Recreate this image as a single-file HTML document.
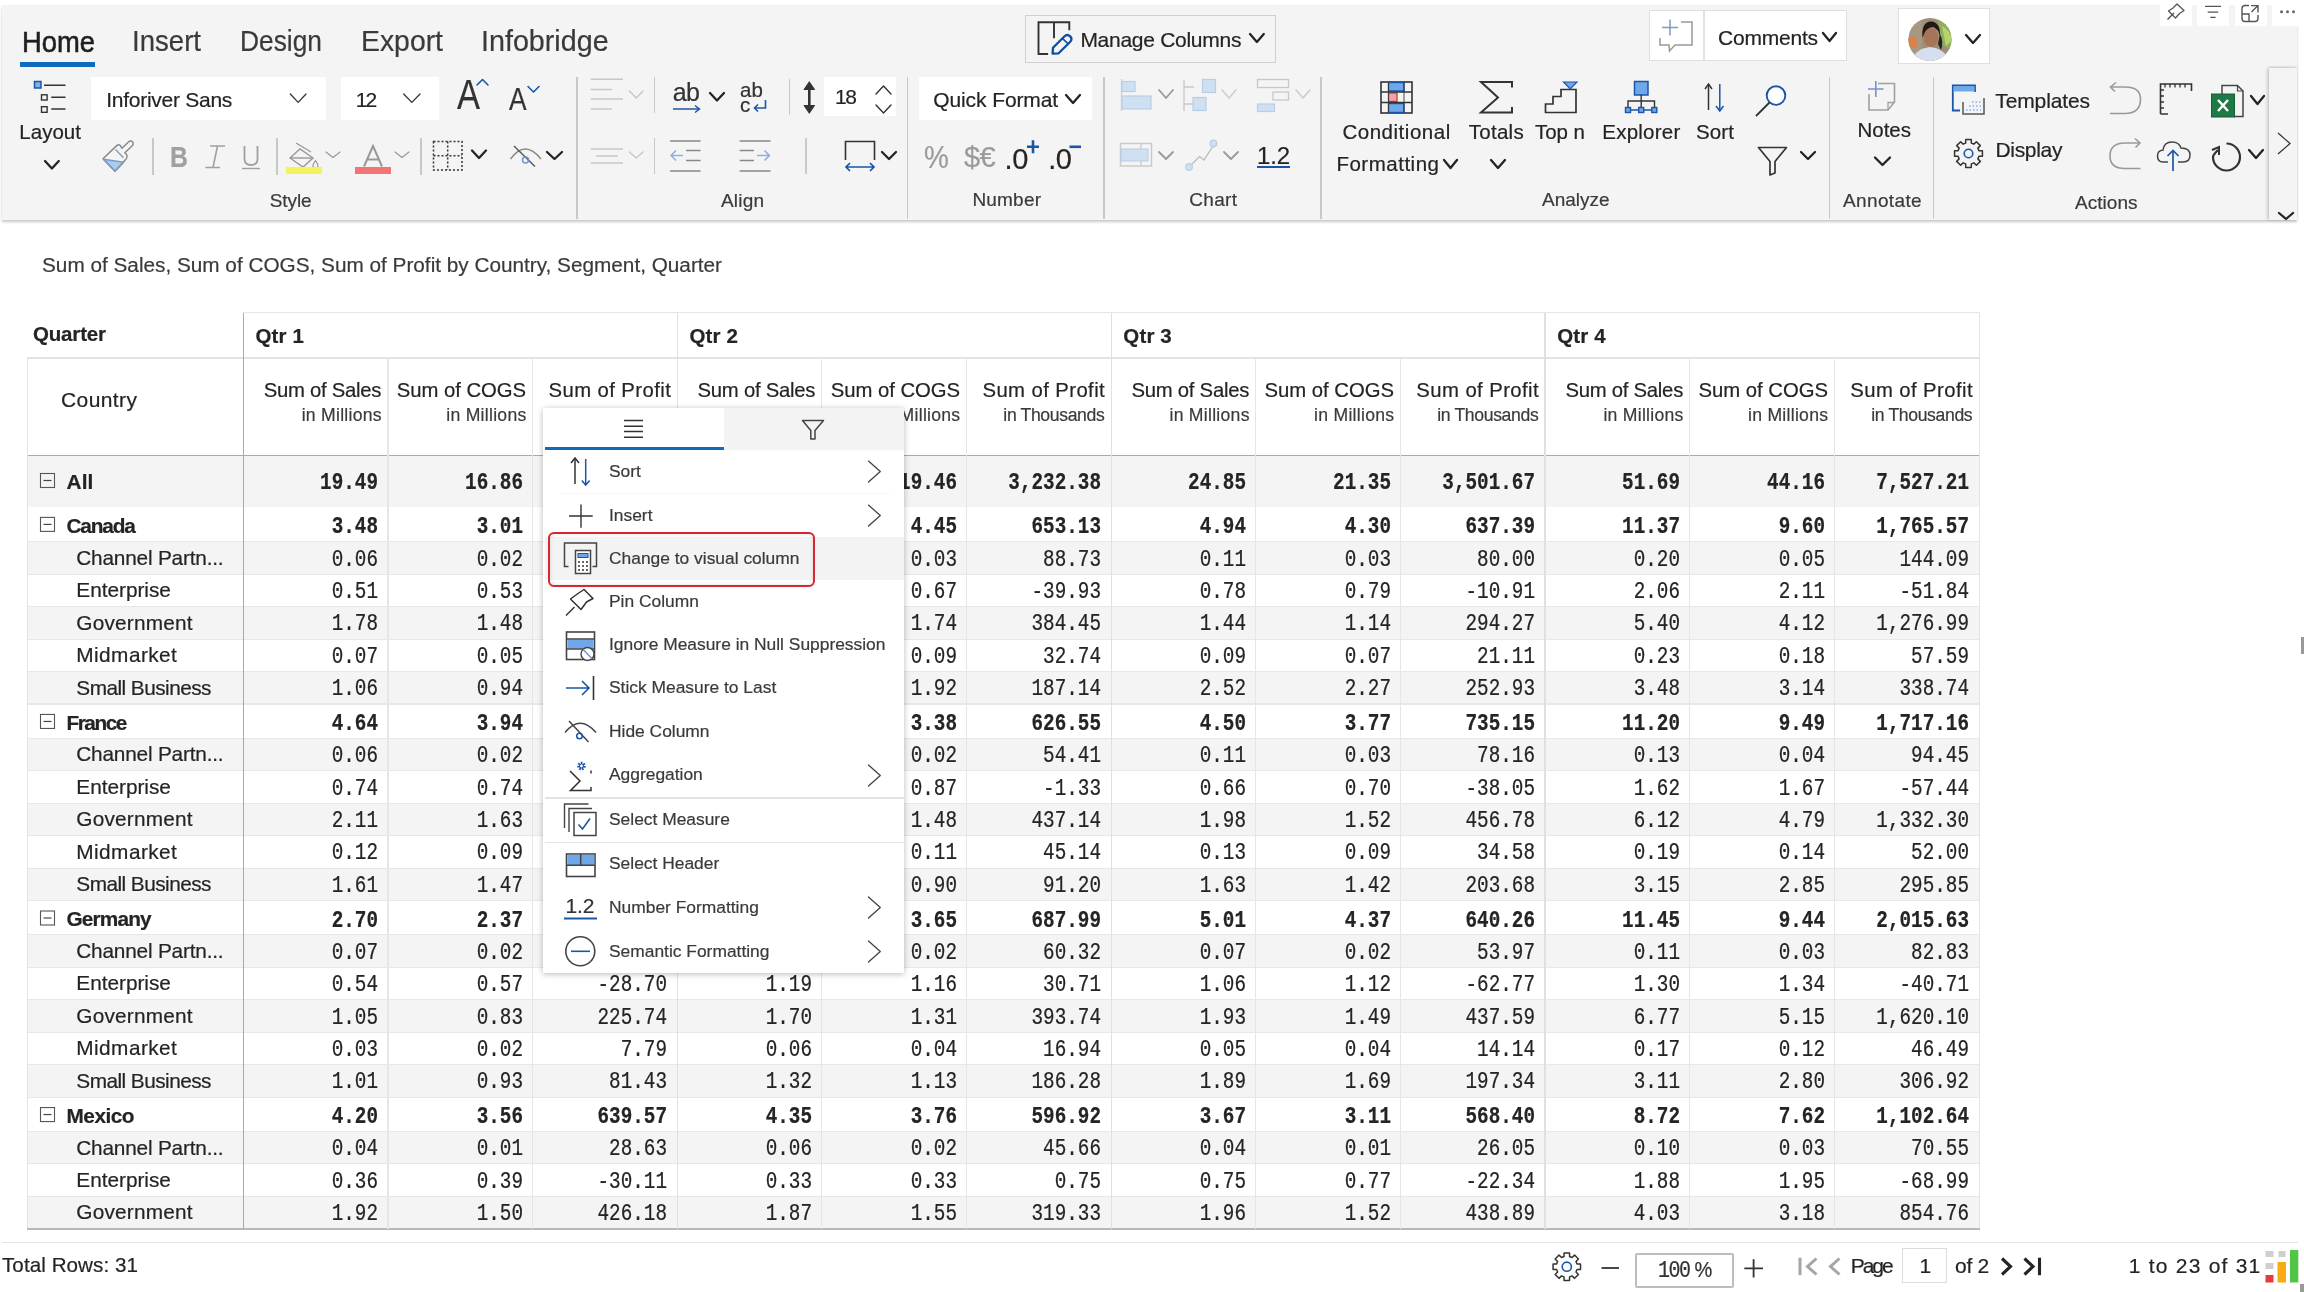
<!DOCTYPE html><html><head><meta charset="utf-8"><style>
html,body{margin:0;padding:0;width:2304px;height:1292px;overflow:hidden;background:#fff;}
body{position:relative;font-family:"Liberation Sans",sans-serif;color:#252423;}
.t{position:absolute;white-space:nowrap;-webkit-text-stroke:0.2px currentColor;}
.b{position:absolute;}
.s{position:absolute;overflow:visible;}
#ov{position:absolute;left:0;top:0;width:2304px;height:1292px;}
</style></head><body><div style="position:absolute;left:0;top:0;width:2304px;height:1292px;will-change:transform;">
<div class="b" style="left:2.00px;top:4.50px;width:2295.00px;height:215.50px;background:#f4f4f4;box-shadow:0 1.5px 2.5px rgba(0,0,0,0.22);"></div>
<div class="b" style="left:2160.00px;top:0.00px;width:32.00px;height:26.00px;background:#ffffff;"></div>
<div class="b" style="left:2197.00px;top:0.00px;width:32.00px;height:26.00px;background:#ffffff;"></div>
<div class="b" style="left:2235.00px;top:0.00px;width:32.00px;height:26.00px;background:#ffffff;"></div>
<div class="b" style="left:2272.00px;top:0.00px;width:32.00px;height:26.00px;background:#ffffff;"></div>
<div class="t" style="left:21.50px;top:26.73px;font-size:29.50px;line-height:29.50px;color:#201f1e;transform:scaleX(0.9276);transform-origin:0 0;-webkit-text-stroke:0.6px #201f1e;">Home</div>
<div class="t" style="left:132.30px;top:27.15px;font-size:29.00px;line-height:29.00px;color:#3b3a39;transform:scaleX(0.9513);transform-origin:0 0;">Insert</div>
<div class="t" style="left:240.30px;top:27.15px;font-size:29.00px;line-height:29.00px;color:#3b3a39;transform:scaleX(0.9083);transform-origin:0 0;">Design</div>
<div class="t" style="left:360.80px;top:27.15px;font-size:29.00px;line-height:29.00px;color:#3b3a39;transform:scaleX(0.9783);transform-origin:0 0;">Export</div>
<div class="t" style="left:481.30px;top:27.15px;font-size:29.00px;line-height:29.00px;color:#3b3a39;transform:scaleX(0.9892);transform-origin:0 0;">Infobridge</div>
<div class="b" style="left:20.00px;top:62.00px;width:75.00px;height:5.00px;background:#0f6cbd;"></div>
<div class="b" style="left:1024.50px;top:14.60px;width:251.00px;height:48.40px;background:#f4f4f4;border:1.5px solid #d0d0d0;box-sizing:border-box;"></div>
<div class="t" style="left:1080.40px;top:28.52px;font-size:21.00px;line-height:21.00px;letter-spacing:-0.276px;">Manage Columns</div>
<div class="b" style="left:1648.60px;top:9.70px;width:198.00px;height:51.60px;background:#ffffff;border:1.5px solid #dedede;box-sizing:border-box;"></div>
<div class="b" style="left:1703.30px;top:10.00px;width:1.50px;height:51.00px;background:#e2e2e2;"></div>
<div class="t" style="left:1718.00px;top:26.72px;font-size:21.00px;line-height:21.00px;letter-spacing:-0.218px;">Comments</div>
<div class="b" style="left:1898.30px;top:7.50px;width:91.40px;height:56.50px;background:#ffffff;border:1.5px solid #e0e0e0;box-sizing:border-box;"></div>
<div class="b" style="left:152.25px;top:138.00px;width:1.50px;height:36.50px;background:#c8c8c8;"></div>
<div class="b" style="left:276.25px;top:138.00px;width:1.50px;height:36.50px;background:#c8c8c8;"></div>
<div class="b" style="left:420.25px;top:138.00px;width:1.50px;height:36.50px;background:#c8c8c8;"></div>
<div class="b" style="left:576.25px;top:77.00px;width:1.50px;height:141.60px;background:#c8c8c8;"></div>
<div class="b" style="left:653.75px;top:77.00px;width:1.50px;height:36.00px;background:#c8c8c8;"></div>
<div class="b" style="left:653.75px;top:138.00px;width:1.50px;height:36.00px;background:#c8c8c8;"></div>
<div class="b" style="left:788.75px;top:79.00px;width:1.50px;height:36.00px;background:#c8c8c8;"></div>
<div class="b" style="left:805.25px;top:138.00px;width:1.50px;height:36.00px;background:#c8c8c8;"></div>
<div class="b" style="left:906.65px;top:77.00px;width:1.50px;height:142.00px;background:#c8c8c8;"></div>
<div class="b" style="left:1103.25px;top:77.00px;width:1.50px;height:142.00px;background:#c8c8c8;"></div>
<div class="b" style="left:1320.25px;top:77.00px;width:1.50px;height:142.00px;background:#c8c8c8;"></div>
<div class="b" style="left:1828.95px;top:77.00px;width:1.50px;height:142.00px;background:#c8c8c8;"></div>
<div class="b" style="left:1932.55px;top:77.00px;width:1.50px;height:142.00px;background:#c8c8c8;"></div>
<div class="t" style="left:19.30px;top:121.95px;font-size:20.50px;line-height:20.50px;letter-spacing:0.030px;">Layout</div>
<div class="b" style="left:91.00px;top:77.10px;width:235.00px;height:42.80px;background:#ffffff;"></div>
<div class="t" style="left:106.30px;top:88.52px;font-size:21.00px;line-height:21.00px;letter-spacing:-0.274px;">Inforiver Sans</div>
<div class="b" style="left:340.80px;top:77.10px;width:98.20px;height:42.80px;background:#ffffff;"></div>
<div class="t" style="left:355.70px;top:88.92px;font-size:21.00px;line-height:21.00px;letter-spacing:-1.859px;">12</div>
<div class="t" style="left:457.00px;top:74.45px;font-size:42.00px;line-height:42.00px;color:#333;transform:scaleX(0.82);transform-origin:left;">A</div>
<div class="t" style="left:509.00px;top:83.76px;font-size:31.00px;line-height:31.00px;color:#333;transform:scaleX(0.85);transform-origin:left;">A</div>
<div class="t" style="left:170.20px;top:142.23px;font-size:29.50px;line-height:29.50px;font-weight:bold;color:#a0a0a0;transform:scaleX(0.84);transform-origin:left;">B</div>
<div class="t" style="left:269.70px;top:190.62px;font-size:19.00px;line-height:19.00px;color:#3b3a39;letter-spacing:-0.060px;">Style</div>
<div class="t" style="left:672.80px;top:80.34px;font-size:25.00px;line-height:25.00px;color:#333;letter-spacing:-0.609px;">ab</div>
<div class="t" style="left:740.00px;top:79.85px;font-size:20.50px;line-height:20.50px;color:#333;letter-spacing:0.197px;">ab</div>
<div class="t" style="left:740.00px;top:94.95px;font-size:20.50px;line-height:20.50px;color:#333;">c</div>
<div class="b" style="left:823.50px;top:77.00px;width:72.50px;height:39.00px;background:#ffffff;"></div>
<div class="t" style="left:835.00px;top:86.22px;font-size:21.00px;line-height:21.00px;letter-spacing:-1.359px;">18</div>
<div class="t" style="left:721.00px;top:190.72px;font-size:19.00px;line-height:19.00px;color:#3b3a39;letter-spacing:0.187px;">Align</div>
<div class="b" style="left:919.20px;top:76.80px;width:173.00px;height:43.30px;background:#ffffff;"></div>
<div class="t" style="left:933.20px;top:88.52px;font-size:21.00px;line-height:21.00px;letter-spacing:-0.093px;">Quick Format</div>
<div class="t" style="left:923.50px;top:141.56px;font-size:31.00px;line-height:31.00px;color:#9a9a9a;transform:scaleX(0.9);transform-origin:left;">%</div>
<div class="t" style="left:964.00px;top:143.05px;font-size:29.00px;line-height:29.00px;color:#9a9a9a;letter-spacing:-0.558px;">$€</div>
<div class="t" style="left:1004.60px;top:145.15px;font-size:29.00px;line-height:29.00px;">.</div>
<div class="t" style="left:1012.20px;top:145.15px;font-size:29.00px;line-height:29.00px;">0</div>
<div class="t" style="left:1048.20px;top:145.15px;font-size:29.00px;line-height:29.00px;">.</div>
<div class="t" style="left:1055.70px;top:145.15px;font-size:29.00px;line-height:29.00px;">0</div>
<div class="t" style="left:972.40px;top:190.42px;font-size:19.00px;line-height:19.00px;color:#3b3a39;letter-spacing:0.204px;">Number</div>
<div class="t" style="left:1257.00px;top:143.68px;font-size:24.00px;line-height:24.00px;letter-spacing:-0.182px;">1.2</div>
<div class="t" style="left:1189.30px;top:190.42px;font-size:19.00px;line-height:19.00px;color:#3b3a39;letter-spacing:0.309px;">Chart</div>
<div class="t" style="left:1342.40px;top:121.65px;font-size:20.50px;line-height:20.50px;letter-spacing:0.533px;">Conditional</div>
<div class="t" style="left:1336.40px;top:154.45px;font-size:20.50px;line-height:20.50px;letter-spacing:0.513px;">Formatting</div>
<div class="t" style="left:1468.70px;top:121.65px;font-size:20.50px;line-height:20.50px;letter-spacing:0.289px;">Totals</div>
<div class="t" style="left:1535.00px;top:121.65px;font-size:20.50px;line-height:20.50px;letter-spacing:-0.037px;">Top n</div>
<div class="t" style="left:1602.30px;top:121.65px;font-size:20.50px;line-height:20.50px;letter-spacing:0.237px;">Explorer</div>
<div class="t" style="left:1696.00px;top:121.65px;font-size:20.50px;line-height:20.50px;letter-spacing:0.134px;">Sort</div>
<div class="t" style="left:1542.00px;top:189.92px;font-size:19.00px;line-height:19.00px;color:#3b3a39;letter-spacing:-0.016px;">Analyze</div>
<div class="t" style="left:1857.50px;top:119.95px;font-size:20.50px;line-height:20.50px;letter-spacing:-0.013px;">Notes</div>
<div class="t" style="left:1843.00px;top:190.82px;font-size:19.00px;line-height:19.00px;color:#3b3a39;letter-spacing:0.362px;">Annotate</div>
<div class="t" style="left:1995.30px;top:89.92px;font-size:21.00px;line-height:21.00px;letter-spacing:-0.127px;">Templates</div>
<div class="t" style="left:1995.50px;top:139.42px;font-size:21.00px;line-height:21.00px;letter-spacing:-0.326px;">Display</div>
<div class="t" style="left:2075.00px;top:193.22px;font-size:19.00px;line-height:19.00px;color:#3b3a39;letter-spacing:0.032px;">Actions</div>
<div class="b" style="left:2268.60px;top:67.50px;width:28.40px;height:152.50px;background:#f4f4f4;box-shadow:-2px 0 3px rgba(0,0,0,0.15), 0 -1px 2px rgba(0,0,0,0.12);"></div>
<div class="t" style="left:42.00px;top:254.94px;font-size:20.75px;line-height:20.75px;color:#3b3a39;">Sum of Sales, Sum of COGS, Sum of Profit by Country, Segment, Quarter</div>
<div class="b" style="left:27.00px;top:455.30px;width:1952.00px;height:51.70px;background:#f4f4f4;"></div>
<div class="b" style="left:27.00px;top:507.00px;width:1952.00px;height:34.80px;background:#ffffff;"></div>
<div class="b" style="left:27.00px;top:541.80px;width:1952.00px;height:32.45px;background:#f4f4f4;"></div>
<div class="b" style="left:27.00px;top:574.25px;width:1952.00px;height:32.45px;background:#ffffff;"></div>
<div class="b" style="left:27.00px;top:606.70px;width:1952.00px;height:32.45px;background:#f4f4f4;"></div>
<div class="b" style="left:27.00px;top:639.15px;width:1952.00px;height:32.45px;background:#ffffff;"></div>
<div class="b" style="left:27.00px;top:671.60px;width:1952.00px;height:32.45px;background:#f4f4f4;"></div>
<div class="b" style="left:27.00px;top:704.05px;width:1952.00px;height:34.30px;background:#ffffff;"></div>
<div class="b" style="left:27.00px;top:738.35px;width:1952.00px;height:32.45px;background:#f4f4f4;"></div>
<div class="b" style="left:27.00px;top:770.80px;width:1952.00px;height:32.45px;background:#ffffff;"></div>
<div class="b" style="left:27.00px;top:803.25px;width:1952.00px;height:32.45px;background:#f4f4f4;"></div>
<div class="b" style="left:27.00px;top:835.70px;width:1952.00px;height:32.45px;background:#ffffff;"></div>
<div class="b" style="left:27.00px;top:868.15px;width:1952.00px;height:32.45px;background:#f4f4f4;"></div>
<div class="b" style="left:27.00px;top:900.60px;width:1952.00px;height:34.30px;background:#ffffff;"></div>
<div class="b" style="left:27.00px;top:934.90px;width:1952.00px;height:32.45px;background:#f4f4f4;"></div>
<div class="b" style="left:27.00px;top:967.35px;width:1952.00px;height:32.45px;background:#ffffff;"></div>
<div class="b" style="left:27.00px;top:999.80px;width:1952.00px;height:32.45px;background:#f4f4f4;"></div>
<div class="b" style="left:27.00px;top:1032.25px;width:1952.00px;height:32.45px;background:#ffffff;"></div>
<div class="b" style="left:27.00px;top:1064.70px;width:1952.00px;height:32.45px;background:#f4f4f4;"></div>
<div class="b" style="left:27.00px;top:1097.15px;width:1952.00px;height:34.30px;background:#ffffff;"></div>
<div class="b" style="left:27.00px;top:1131.45px;width:1952.00px;height:32.45px;background:#f4f4f4;"></div>
<div class="b" style="left:27.00px;top:1163.90px;width:1952.00px;height:32.45px;background:#ffffff;"></div>
<div class="b" style="left:27.00px;top:1196.35px;width:1952.00px;height:32.45px;background:#f4f4f4;"></div>
<div class="b" style="left:27.00px;top:541.20px;width:1952.00px;height:1.20px;background:#e8e8e8;"></div>
<div class="b" style="left:27.00px;top:573.65px;width:1952.00px;height:1.20px;background:#e8e8e8;"></div>
<div class="b" style="left:27.00px;top:606.10px;width:1952.00px;height:1.20px;background:#e8e8e8;"></div>
<div class="b" style="left:27.00px;top:638.55px;width:1952.00px;height:1.20px;background:#e8e8e8;"></div>
<div class="b" style="left:27.00px;top:671.00px;width:1952.00px;height:1.20px;background:#e8e8e8;"></div>
<div class="b" style="left:27.00px;top:703.45px;width:1952.00px;height:1.20px;background:#e8e8e8;"></div>
<div class="b" style="left:27.00px;top:737.75px;width:1952.00px;height:1.20px;background:#e8e8e8;"></div>
<div class="b" style="left:27.00px;top:770.20px;width:1952.00px;height:1.20px;background:#e8e8e8;"></div>
<div class="b" style="left:27.00px;top:802.65px;width:1952.00px;height:1.20px;background:#e8e8e8;"></div>
<div class="b" style="left:27.00px;top:835.10px;width:1952.00px;height:1.20px;background:#e8e8e8;"></div>
<div class="b" style="left:27.00px;top:867.55px;width:1952.00px;height:1.20px;background:#e8e8e8;"></div>
<div class="b" style="left:27.00px;top:900.00px;width:1952.00px;height:1.20px;background:#e8e8e8;"></div>
<div class="b" style="left:27.00px;top:934.30px;width:1952.00px;height:1.20px;background:#e8e8e8;"></div>
<div class="b" style="left:27.00px;top:966.75px;width:1952.00px;height:1.20px;background:#e8e8e8;"></div>
<div class="b" style="left:27.00px;top:999.20px;width:1952.00px;height:1.20px;background:#e8e8e8;"></div>
<div class="b" style="left:27.00px;top:1031.65px;width:1952.00px;height:1.20px;background:#e8e8e8;"></div>
<div class="b" style="left:27.00px;top:1064.10px;width:1952.00px;height:1.20px;background:#e8e8e8;"></div>
<div class="b" style="left:27.00px;top:1096.55px;width:1952.00px;height:1.20px;background:#e8e8e8;"></div>
<div class="b" style="left:27.00px;top:1130.85px;width:1952.00px;height:1.20px;background:#e8e8e8;"></div>
<div class="b" style="left:27.00px;top:1163.30px;width:1952.00px;height:1.20px;background:#e8e8e8;"></div>
<div class="b" style="left:27.00px;top:1195.75px;width:1952.00px;height:1.20px;background:#e8e8e8;"></div>
<div class="b" style="left:27.00px;top:1228.20px;width:1952.00px;height:1.20px;background:#e8e8e8;"></div>
<div class="b" style="left:243.30px;top:312.00px;width:1736.20px;height:1.20px;background:#e6e6e6;"></div>
<div class="b" style="left:27.00px;top:357.40px;width:1952.50px;height:1.30px;background:#e3e3e3;"></div>
<div class="b" style="left:27.00px;top:454.90px;width:1952.50px;height:1.30px;background:#a9a9a9;"></div>
<div class="b" style="left:27.00px;top:357.40px;width:1.20px;height:872.10px;background:#e3e3e3;"></div>
<div class="b" style="left:1978.60px;top:312.00px;width:1.20px;height:917.50px;background:#e3e3e3;"></div>
<div class="b" style="left:27.00px;top:1228.30px;width:1952.50px;height:1.50px;background:#b8b8b8;"></div>
<div class="b" style="left:242.60px;top:312.50px;width:1.40px;height:916.50px;background:#a9a9a9;"></div>
<div class="b" style="left:387.34px;top:358.00px;width:1.20px;height:871.00px;background:#e6e6e6;"></div>
<div class="b" style="left:531.98px;top:358.00px;width:1.20px;height:871.00px;background:#e6e6e6;"></div>
<div class="b" style="left:676.62px;top:312.50px;width:1.20px;height:916.50px;background:#e0e0e0;"></div>
<div class="b" style="left:821.26px;top:358.00px;width:1.20px;height:871.00px;background:#e6e6e6;"></div>
<div class="b" style="left:965.90px;top:358.00px;width:1.20px;height:871.00px;background:#e6e6e6;"></div>
<div class="b" style="left:1110.54px;top:312.50px;width:1.20px;height:916.50px;background:#e0e0e0;"></div>
<div class="b" style="left:1255.18px;top:358.00px;width:1.20px;height:871.00px;background:#e6e6e6;"></div>
<div class="b" style="left:1399.82px;top:358.00px;width:1.20px;height:871.00px;background:#e6e6e6;"></div>
<div class="b" style="left:1544.46px;top:312.50px;width:1.20px;height:916.50px;background:#e0e0e0;"></div>
<div class="b" style="left:1689.10px;top:358.00px;width:1.20px;height:871.00px;background:#e6e6e6;"></div>
<div class="b" style="left:1833.74px;top:358.00px;width:1.20px;height:871.00px;background:#e6e6e6;"></div>
<div class="t" style="left:33.00px;top:323.85px;font-size:20.50px;line-height:20.50px;font-weight:bold;letter-spacing:-0.176px;">Quarter</div>
<div class="t" style="left:255.50px;top:325.65px;font-size:20.50px;line-height:20.50px;font-weight:bold;letter-spacing:0.138px;">Qtr 1</div>
<div class="t" style="left:689.42px;top:325.65px;font-size:20.50px;line-height:20.50px;font-weight:bold;letter-spacing:0.138px;">Qtr 2</div>
<div class="t" style="left:1123.34px;top:325.65px;font-size:20.50px;line-height:20.50px;font-weight:bold;letter-spacing:0.138px;">Qtr 3</div>
<div class="t" style="left:1557.26px;top:325.65px;font-size:20.50px;line-height:20.50px;font-weight:bold;letter-spacing:0.138px;">Qtr 4</div>
<div class="t" style="left:61.00px;top:388.82px;font-size:21.00px;line-height:21.00px;letter-spacing:0.411px;">Country</div>
<div class="t" style="left:263.64px;top:379.62px;font-size:20.30px;line-height:20.30px;letter-spacing:-0.248px;">Sum of Sales</div>
<div class="t" style="left:301.64px;top:406.70px;font-size:17.60px;line-height:17.60px;color:#3b3a39;letter-spacing:0.273px;">in Millions</div>
<div class="t" style="left:396.78px;top:379.62px;font-size:20.30px;line-height:20.30px;letter-spacing:-0.023px;">Sum of COGS</div>
<div class="t" style="left:446.28px;top:406.70px;font-size:17.60px;line-height:17.60px;color:#3b3a39;letter-spacing:0.273px;">in Millions</div>
<div class="t" style="left:548.52px;top:379.62px;font-size:20.30px;line-height:20.30px;letter-spacing:0.422px;">Sum of Profit</div>
<div class="t" style="left:569.42px;top:406.70px;font-size:17.60px;line-height:17.60px;color:#3b3a39;letter-spacing:-0.350px;">in Thousands</div>
<div class="t" style="left:697.56px;top:379.62px;font-size:20.30px;line-height:20.30px;letter-spacing:-0.248px;">Sum of Sales</div>
<div class="t" style="left:735.56px;top:406.70px;font-size:17.60px;line-height:17.60px;color:#3b3a39;letter-spacing:0.273px;">in Millions</div>
<div class="t" style="left:830.70px;top:379.62px;font-size:20.30px;line-height:20.30px;letter-spacing:-0.023px;">Sum of COGS</div>
<div class="t" style="left:880.20px;top:406.70px;font-size:17.60px;line-height:17.60px;color:#3b3a39;letter-spacing:0.273px;">in Millions</div>
<div class="t" style="left:982.44px;top:379.62px;font-size:20.30px;line-height:20.30px;letter-spacing:0.422px;">Sum of Profit</div>
<div class="t" style="left:1003.34px;top:406.70px;font-size:17.60px;line-height:17.60px;color:#3b3a39;letter-spacing:-0.350px;">in Thousands</div>
<div class="t" style="left:1131.48px;top:379.62px;font-size:20.30px;line-height:20.30px;letter-spacing:-0.248px;">Sum of Sales</div>
<div class="t" style="left:1169.48px;top:406.70px;font-size:17.60px;line-height:17.60px;color:#3b3a39;letter-spacing:0.273px;">in Millions</div>
<div class="t" style="left:1264.62px;top:379.62px;font-size:20.30px;line-height:20.30px;letter-spacing:-0.023px;">Sum of COGS</div>
<div class="t" style="left:1314.12px;top:406.70px;font-size:17.60px;line-height:17.60px;color:#3b3a39;letter-spacing:0.273px;">in Millions</div>
<div class="t" style="left:1416.36px;top:379.62px;font-size:20.30px;line-height:20.30px;letter-spacing:0.422px;">Sum of Profit</div>
<div class="t" style="left:1437.26px;top:406.70px;font-size:17.60px;line-height:17.60px;color:#3b3a39;letter-spacing:-0.350px;">in Thousands</div>
<div class="t" style="left:1565.40px;top:379.62px;font-size:20.30px;line-height:20.30px;letter-spacing:-0.248px;">Sum of Sales</div>
<div class="t" style="left:1603.40px;top:406.70px;font-size:17.60px;line-height:17.60px;color:#3b3a39;letter-spacing:0.273px;">in Millions</div>
<div class="t" style="left:1698.54px;top:379.62px;font-size:20.30px;line-height:20.30px;letter-spacing:-0.023px;">Sum of COGS</div>
<div class="t" style="left:1748.04px;top:406.70px;font-size:17.60px;line-height:17.60px;color:#3b3a39;letter-spacing:0.273px;">in Millions</div>
<div class="t" style="left:1850.28px;top:379.62px;font-size:20.30px;line-height:20.30px;letter-spacing:0.422px;">Sum of Profit</div>
<div class="t" style="left:1871.18px;top:406.70px;font-size:17.60px;line-height:17.60px;color:#3b3a39;letter-spacing:-0.350px;">in Thousands</div>
<div class="t" style="left:66.50px;top:471.89px;font-size:20.80px;line-height:20.80px;font-weight:bold;letter-spacing:0.111px;">All</div>
<div class="t" style="left:318.13px;top:474.27px;font-size:20.00px;line-height:20.00px;font-family:'Liberation Mono', monospace;font-weight:bold;transform:scale(0.965,1.17);transform-origin:100% 15.33px;">19.49</div>
<div class="t" style="left:462.77px;top:474.27px;font-size:20.00px;line-height:20.00px;font-family:'Liberation Mono', monospace;font-weight:bold;transform:scale(0.965,1.17);transform-origin:100% 15.33px;">16.86</div>
<div class="t" style="left:896.69px;top:474.27px;font-size:20.00px;line-height:20.00px;font-family:'Liberation Mono', monospace;font-weight:bold;transform:scale(0.965,1.17);transform-origin:100% 15.33px;">19.46</div>
<div class="t" style="left:1005.33px;top:474.27px;font-size:20.00px;line-height:20.00px;font-family:'Liberation Mono', monospace;font-weight:bold;transform:scale(0.965,1.17);transform-origin:100% 15.33px;">3,232.38</div>
<div class="t" style="left:1185.97px;top:474.27px;font-size:20.00px;line-height:20.00px;font-family:'Liberation Mono', monospace;font-weight:bold;transform:scale(0.965,1.17);transform-origin:100% 15.33px;">24.85</div>
<div class="t" style="left:1330.61px;top:474.27px;font-size:20.00px;line-height:20.00px;font-family:'Liberation Mono', monospace;font-weight:bold;transform:scale(0.965,1.17);transform-origin:100% 15.33px;">21.35</div>
<div class="t" style="left:1439.25px;top:474.27px;font-size:20.00px;line-height:20.00px;font-family:'Liberation Mono', monospace;font-weight:bold;transform:scale(0.965,1.17);transform-origin:100% 15.33px;">3,501.67</div>
<div class="t" style="left:1619.89px;top:474.27px;font-size:20.00px;line-height:20.00px;font-family:'Liberation Mono', monospace;font-weight:bold;transform:scale(0.965,1.17);transform-origin:100% 15.33px;">51.69</div>
<div class="t" style="left:1764.53px;top:474.27px;font-size:20.00px;line-height:20.00px;font-family:'Liberation Mono', monospace;font-weight:bold;transform:scale(0.965,1.17);transform-origin:100% 15.33px;">44.16</div>
<div class="t" style="left:1873.17px;top:474.27px;font-size:20.00px;line-height:20.00px;font-family:'Liberation Mono', monospace;font-weight:bold;transform:scale(0.965,1.17);transform-origin:100% 15.33px;">7,527.21</div>
<div class="t" style="left:66.50px;top:515.79px;font-size:20.80px;line-height:20.80px;font-weight:bold;letter-spacing:-1.148px;">Canada</div>
<div class="t" style="left:330.13px;top:518.17px;font-size:20.00px;line-height:20.00px;font-family:'Liberation Mono', monospace;font-weight:bold;transform:scale(0.965,1.17);transform-origin:100% 15.33px;">3.48</div>
<div class="t" style="left:474.77px;top:518.17px;font-size:20.00px;line-height:20.00px;font-family:'Liberation Mono', monospace;font-weight:bold;transform:scale(0.965,1.17);transform-origin:100% 15.33px;">3.01</div>
<div class="t" style="left:908.69px;top:518.17px;font-size:20.00px;line-height:20.00px;font-family:'Liberation Mono', monospace;font-weight:bold;transform:scale(0.965,1.17);transform-origin:100% 15.33px;">4.45</div>
<div class="t" style="left:1029.33px;top:518.17px;font-size:20.00px;line-height:20.00px;font-family:'Liberation Mono', monospace;font-weight:bold;transform:scale(0.965,1.17);transform-origin:100% 15.33px;">653.13</div>
<div class="t" style="left:1197.97px;top:518.17px;font-size:20.00px;line-height:20.00px;font-family:'Liberation Mono', monospace;font-weight:bold;transform:scale(0.965,1.17);transform-origin:100% 15.33px;">4.94</div>
<div class="t" style="left:1342.61px;top:518.17px;font-size:20.00px;line-height:20.00px;font-family:'Liberation Mono', monospace;font-weight:bold;transform:scale(0.965,1.17);transform-origin:100% 15.33px;">4.30</div>
<div class="t" style="left:1463.25px;top:518.17px;font-size:20.00px;line-height:20.00px;font-family:'Liberation Mono', monospace;font-weight:bold;transform:scale(0.965,1.17);transform-origin:100% 15.33px;">637.39</div>
<div class="t" style="left:1619.89px;top:518.17px;font-size:20.00px;line-height:20.00px;font-family:'Liberation Mono', monospace;font-weight:bold;transform:scale(0.965,1.17);transform-origin:100% 15.33px;">11.37</div>
<div class="t" style="left:1776.53px;top:518.17px;font-size:20.00px;line-height:20.00px;font-family:'Liberation Mono', monospace;font-weight:bold;transform:scale(0.965,1.17);transform-origin:100% 15.33px;">9.60</div>
<div class="t" style="left:1873.17px;top:518.17px;font-size:20.00px;line-height:20.00px;font-family:'Liberation Mono', monospace;font-weight:bold;transform:scale(0.965,1.17);transform-origin:100% 15.33px;">1,765.57</div>
<div class="t" style="left:76.30px;top:547.89px;font-size:20.80px;line-height:20.80px;letter-spacing:-0.201px;">Channel Partn...</div>
<div class="t" style="left:330.13px;top:550.57px;font-size:20.00px;line-height:20.00px;font-family:'Liberation Mono', monospace;transform:scale(0.965,1.17);transform-origin:100% 15.33px;">0.06</div>
<div class="t" style="left:474.77px;top:550.57px;font-size:20.00px;line-height:20.00px;font-family:'Liberation Mono', monospace;transform:scale(0.965,1.17);transform-origin:100% 15.33px;">0.02</div>
<div class="t" style="left:908.69px;top:550.57px;font-size:20.00px;line-height:20.00px;font-family:'Liberation Mono', monospace;transform:scale(0.965,1.17);transform-origin:100% 15.33px;">0.03</div>
<div class="t" style="left:1041.33px;top:550.57px;font-size:20.00px;line-height:20.00px;font-family:'Liberation Mono', monospace;transform:scale(0.965,1.17);transform-origin:100% 15.33px;">88.73</div>
<div class="t" style="left:1197.97px;top:550.57px;font-size:20.00px;line-height:20.00px;font-family:'Liberation Mono', monospace;transform:scale(0.965,1.17);transform-origin:100% 15.33px;">0.11</div>
<div class="t" style="left:1342.61px;top:550.57px;font-size:20.00px;line-height:20.00px;font-family:'Liberation Mono', monospace;transform:scale(0.965,1.17);transform-origin:100% 15.33px;">0.03</div>
<div class="t" style="left:1475.25px;top:550.57px;font-size:20.00px;line-height:20.00px;font-family:'Liberation Mono', monospace;transform:scale(0.965,1.17);transform-origin:100% 15.33px;">80.00</div>
<div class="t" style="left:1631.89px;top:550.57px;font-size:20.00px;line-height:20.00px;font-family:'Liberation Mono', monospace;transform:scale(0.965,1.17);transform-origin:100% 15.33px;">0.20</div>
<div class="t" style="left:1776.53px;top:550.57px;font-size:20.00px;line-height:20.00px;font-family:'Liberation Mono', monospace;transform:scale(0.965,1.17);transform-origin:100% 15.33px;">0.05</div>
<div class="t" style="left:1897.17px;top:550.57px;font-size:20.00px;line-height:20.00px;font-family:'Liberation Mono', monospace;transform:scale(0.965,1.17);transform-origin:100% 15.33px;">144.09</div>
<div class="t" style="left:76.30px;top:580.34px;font-size:20.80px;line-height:20.80px;letter-spacing:-0.023px;">Enterprise</div>
<div class="t" style="left:330.13px;top:583.02px;font-size:20.00px;line-height:20.00px;font-family:'Liberation Mono', monospace;transform:scale(0.965,1.17);transform-origin:100% 15.33px;">0.51</div>
<div class="t" style="left:474.77px;top:583.02px;font-size:20.00px;line-height:20.00px;font-family:'Liberation Mono', monospace;transform:scale(0.965,1.17);transform-origin:100% 15.33px;">0.53</div>
<div class="t" style="left:908.69px;top:583.02px;font-size:20.00px;line-height:20.00px;font-family:'Liberation Mono', monospace;transform:scale(0.965,1.17);transform-origin:100% 15.33px;">0.67</div>
<div class="t" style="left:1029.33px;top:583.02px;font-size:20.00px;line-height:20.00px;font-family:'Liberation Mono', monospace;transform:scale(0.965,1.17);transform-origin:100% 15.33px;">-39.93</div>
<div class="t" style="left:1197.97px;top:583.02px;font-size:20.00px;line-height:20.00px;font-family:'Liberation Mono', monospace;transform:scale(0.965,1.17);transform-origin:100% 15.33px;">0.78</div>
<div class="t" style="left:1342.61px;top:583.02px;font-size:20.00px;line-height:20.00px;font-family:'Liberation Mono', monospace;transform:scale(0.965,1.17);transform-origin:100% 15.33px;">0.79</div>
<div class="t" style="left:1463.25px;top:583.02px;font-size:20.00px;line-height:20.00px;font-family:'Liberation Mono', monospace;transform:scale(0.965,1.17);transform-origin:100% 15.33px;">-10.91</div>
<div class="t" style="left:1631.89px;top:583.02px;font-size:20.00px;line-height:20.00px;font-family:'Liberation Mono', monospace;transform:scale(0.965,1.17);transform-origin:100% 15.33px;">2.06</div>
<div class="t" style="left:1776.53px;top:583.02px;font-size:20.00px;line-height:20.00px;font-family:'Liberation Mono', monospace;transform:scale(0.965,1.17);transform-origin:100% 15.33px;">2.11</div>
<div class="t" style="left:1897.17px;top:583.02px;font-size:20.00px;line-height:20.00px;font-family:'Liberation Mono', monospace;transform:scale(0.965,1.17);transform-origin:100% 15.33px;">-51.84</div>
<div class="t" style="left:76.30px;top:612.79px;font-size:20.80px;line-height:20.80px;letter-spacing:0.205px;">Government</div>
<div class="t" style="left:330.13px;top:615.47px;font-size:20.00px;line-height:20.00px;font-family:'Liberation Mono', monospace;transform:scale(0.965,1.17);transform-origin:100% 15.33px;">1.78</div>
<div class="t" style="left:474.77px;top:615.47px;font-size:20.00px;line-height:20.00px;font-family:'Liberation Mono', monospace;transform:scale(0.965,1.17);transform-origin:100% 15.33px;">1.48</div>
<div class="t" style="left:908.69px;top:615.47px;font-size:20.00px;line-height:20.00px;font-family:'Liberation Mono', monospace;transform:scale(0.965,1.17);transform-origin:100% 15.33px;">1.74</div>
<div class="t" style="left:1029.33px;top:615.47px;font-size:20.00px;line-height:20.00px;font-family:'Liberation Mono', monospace;transform:scale(0.965,1.17);transform-origin:100% 15.33px;">384.45</div>
<div class="t" style="left:1197.97px;top:615.47px;font-size:20.00px;line-height:20.00px;font-family:'Liberation Mono', monospace;transform:scale(0.965,1.17);transform-origin:100% 15.33px;">1.44</div>
<div class="t" style="left:1342.61px;top:615.47px;font-size:20.00px;line-height:20.00px;font-family:'Liberation Mono', monospace;transform:scale(0.965,1.17);transform-origin:100% 15.33px;">1.14</div>
<div class="t" style="left:1463.25px;top:615.47px;font-size:20.00px;line-height:20.00px;font-family:'Liberation Mono', monospace;transform:scale(0.965,1.17);transform-origin:100% 15.33px;">294.27</div>
<div class="t" style="left:1631.89px;top:615.47px;font-size:20.00px;line-height:20.00px;font-family:'Liberation Mono', monospace;transform:scale(0.965,1.17);transform-origin:100% 15.33px;">5.40</div>
<div class="t" style="left:1776.53px;top:615.47px;font-size:20.00px;line-height:20.00px;font-family:'Liberation Mono', monospace;transform:scale(0.965,1.17);transform-origin:100% 15.33px;">4.12</div>
<div class="t" style="left:1873.17px;top:615.47px;font-size:20.00px;line-height:20.00px;font-family:'Liberation Mono', monospace;transform:scale(0.965,1.17);transform-origin:100% 15.33px;">1,276.99</div>
<div class="t" style="left:76.30px;top:645.24px;font-size:20.80px;line-height:20.80px;letter-spacing:0.439px;">Midmarket</div>
<div class="t" style="left:330.13px;top:647.92px;font-size:20.00px;line-height:20.00px;font-family:'Liberation Mono', monospace;transform:scale(0.965,1.17);transform-origin:100% 15.33px;">0.07</div>
<div class="t" style="left:474.77px;top:647.92px;font-size:20.00px;line-height:20.00px;font-family:'Liberation Mono', monospace;transform:scale(0.965,1.17);transform-origin:100% 15.33px;">0.05</div>
<div class="t" style="left:908.69px;top:647.92px;font-size:20.00px;line-height:20.00px;font-family:'Liberation Mono', monospace;transform:scale(0.965,1.17);transform-origin:100% 15.33px;">0.09</div>
<div class="t" style="left:1041.33px;top:647.92px;font-size:20.00px;line-height:20.00px;font-family:'Liberation Mono', monospace;transform:scale(0.965,1.17);transform-origin:100% 15.33px;">32.74</div>
<div class="t" style="left:1197.97px;top:647.92px;font-size:20.00px;line-height:20.00px;font-family:'Liberation Mono', monospace;transform:scale(0.965,1.17);transform-origin:100% 15.33px;">0.09</div>
<div class="t" style="left:1342.61px;top:647.92px;font-size:20.00px;line-height:20.00px;font-family:'Liberation Mono', monospace;transform:scale(0.965,1.17);transform-origin:100% 15.33px;">0.07</div>
<div class="t" style="left:1475.25px;top:647.92px;font-size:20.00px;line-height:20.00px;font-family:'Liberation Mono', monospace;transform:scale(0.965,1.17);transform-origin:100% 15.33px;">21.11</div>
<div class="t" style="left:1631.89px;top:647.92px;font-size:20.00px;line-height:20.00px;font-family:'Liberation Mono', monospace;transform:scale(0.965,1.17);transform-origin:100% 15.33px;">0.23</div>
<div class="t" style="left:1776.53px;top:647.92px;font-size:20.00px;line-height:20.00px;font-family:'Liberation Mono', monospace;transform:scale(0.965,1.17);transform-origin:100% 15.33px;">0.18</div>
<div class="t" style="left:1909.17px;top:647.92px;font-size:20.00px;line-height:20.00px;font-family:'Liberation Mono', monospace;transform:scale(0.965,1.17);transform-origin:100% 15.33px;">57.59</div>
<div class="t" style="left:76.30px;top:677.69px;font-size:20.80px;line-height:20.80px;letter-spacing:-0.538px;">Small Business</div>
<div class="t" style="left:330.13px;top:680.37px;font-size:20.00px;line-height:20.00px;font-family:'Liberation Mono', monospace;transform:scale(0.965,1.17);transform-origin:100% 15.33px;">1.06</div>
<div class="t" style="left:474.77px;top:680.37px;font-size:20.00px;line-height:20.00px;font-family:'Liberation Mono', monospace;transform:scale(0.965,1.17);transform-origin:100% 15.33px;">0.94</div>
<div class="t" style="left:908.69px;top:680.37px;font-size:20.00px;line-height:20.00px;font-family:'Liberation Mono', monospace;transform:scale(0.965,1.17);transform-origin:100% 15.33px;">1.92</div>
<div class="t" style="left:1029.33px;top:680.37px;font-size:20.00px;line-height:20.00px;font-family:'Liberation Mono', monospace;transform:scale(0.965,1.17);transform-origin:100% 15.33px;">187.14</div>
<div class="t" style="left:1197.97px;top:680.37px;font-size:20.00px;line-height:20.00px;font-family:'Liberation Mono', monospace;transform:scale(0.965,1.17);transform-origin:100% 15.33px;">2.52</div>
<div class="t" style="left:1342.61px;top:680.37px;font-size:20.00px;line-height:20.00px;font-family:'Liberation Mono', monospace;transform:scale(0.965,1.17);transform-origin:100% 15.33px;">2.27</div>
<div class="t" style="left:1463.25px;top:680.37px;font-size:20.00px;line-height:20.00px;font-family:'Liberation Mono', monospace;transform:scale(0.965,1.17);transform-origin:100% 15.33px;">252.93</div>
<div class="t" style="left:1631.89px;top:680.37px;font-size:20.00px;line-height:20.00px;font-family:'Liberation Mono', monospace;transform:scale(0.965,1.17);transform-origin:100% 15.33px;">3.48</div>
<div class="t" style="left:1776.53px;top:680.37px;font-size:20.00px;line-height:20.00px;font-family:'Liberation Mono', monospace;transform:scale(0.965,1.17);transform-origin:100% 15.33px;">3.14</div>
<div class="t" style="left:1897.17px;top:680.37px;font-size:20.00px;line-height:20.00px;font-family:'Liberation Mono', monospace;transform:scale(0.965,1.17);transform-origin:100% 15.33px;">338.74</div>
<div class="t" style="left:66.50px;top:712.84px;font-size:20.80px;line-height:20.80px;font-weight:bold;letter-spacing:-1.462px;">France</div>
<div class="t" style="left:330.13px;top:715.22px;font-size:20.00px;line-height:20.00px;font-family:'Liberation Mono', monospace;font-weight:bold;transform:scale(0.965,1.17);transform-origin:100% 15.33px;">4.64</div>
<div class="t" style="left:474.77px;top:715.22px;font-size:20.00px;line-height:20.00px;font-family:'Liberation Mono', monospace;font-weight:bold;transform:scale(0.965,1.17);transform-origin:100% 15.33px;">3.94</div>
<div class="t" style="left:908.69px;top:715.22px;font-size:20.00px;line-height:20.00px;font-family:'Liberation Mono', monospace;font-weight:bold;transform:scale(0.965,1.17);transform-origin:100% 15.33px;">3.38</div>
<div class="t" style="left:1029.33px;top:715.22px;font-size:20.00px;line-height:20.00px;font-family:'Liberation Mono', monospace;font-weight:bold;transform:scale(0.965,1.17);transform-origin:100% 15.33px;">626.55</div>
<div class="t" style="left:1197.97px;top:715.22px;font-size:20.00px;line-height:20.00px;font-family:'Liberation Mono', monospace;font-weight:bold;transform:scale(0.965,1.17);transform-origin:100% 15.33px;">4.50</div>
<div class="t" style="left:1342.61px;top:715.22px;font-size:20.00px;line-height:20.00px;font-family:'Liberation Mono', monospace;font-weight:bold;transform:scale(0.965,1.17);transform-origin:100% 15.33px;">3.77</div>
<div class="t" style="left:1463.25px;top:715.22px;font-size:20.00px;line-height:20.00px;font-family:'Liberation Mono', monospace;font-weight:bold;transform:scale(0.965,1.17);transform-origin:100% 15.33px;">735.15</div>
<div class="t" style="left:1619.89px;top:715.22px;font-size:20.00px;line-height:20.00px;font-family:'Liberation Mono', monospace;font-weight:bold;transform:scale(0.965,1.17);transform-origin:100% 15.33px;">11.20</div>
<div class="t" style="left:1776.53px;top:715.22px;font-size:20.00px;line-height:20.00px;font-family:'Liberation Mono', monospace;font-weight:bold;transform:scale(0.965,1.17);transform-origin:100% 15.33px;">9.49</div>
<div class="t" style="left:1873.17px;top:715.22px;font-size:20.00px;line-height:20.00px;font-family:'Liberation Mono', monospace;font-weight:bold;transform:scale(0.965,1.17);transform-origin:100% 15.33px;">1,717.16</div>
<div class="t" style="left:76.30px;top:744.44px;font-size:20.80px;line-height:20.80px;letter-spacing:-0.201px;">Channel Partn...</div>
<div class="t" style="left:330.13px;top:747.12px;font-size:20.00px;line-height:20.00px;font-family:'Liberation Mono', monospace;transform:scale(0.965,1.17);transform-origin:100% 15.33px;">0.06</div>
<div class="t" style="left:474.77px;top:747.12px;font-size:20.00px;line-height:20.00px;font-family:'Liberation Mono', monospace;transform:scale(0.965,1.17);transform-origin:100% 15.33px;">0.02</div>
<div class="t" style="left:908.69px;top:747.12px;font-size:20.00px;line-height:20.00px;font-family:'Liberation Mono', monospace;transform:scale(0.965,1.17);transform-origin:100% 15.33px;">0.02</div>
<div class="t" style="left:1041.33px;top:747.12px;font-size:20.00px;line-height:20.00px;font-family:'Liberation Mono', monospace;transform:scale(0.965,1.17);transform-origin:100% 15.33px;">54.41</div>
<div class="t" style="left:1197.97px;top:747.12px;font-size:20.00px;line-height:20.00px;font-family:'Liberation Mono', monospace;transform:scale(0.965,1.17);transform-origin:100% 15.33px;">0.11</div>
<div class="t" style="left:1342.61px;top:747.12px;font-size:20.00px;line-height:20.00px;font-family:'Liberation Mono', monospace;transform:scale(0.965,1.17);transform-origin:100% 15.33px;">0.03</div>
<div class="t" style="left:1475.25px;top:747.12px;font-size:20.00px;line-height:20.00px;font-family:'Liberation Mono', monospace;transform:scale(0.965,1.17);transform-origin:100% 15.33px;">78.16</div>
<div class="t" style="left:1631.89px;top:747.12px;font-size:20.00px;line-height:20.00px;font-family:'Liberation Mono', monospace;transform:scale(0.965,1.17);transform-origin:100% 15.33px;">0.13</div>
<div class="t" style="left:1776.53px;top:747.12px;font-size:20.00px;line-height:20.00px;font-family:'Liberation Mono', monospace;transform:scale(0.965,1.17);transform-origin:100% 15.33px;">0.04</div>
<div class="t" style="left:1909.17px;top:747.12px;font-size:20.00px;line-height:20.00px;font-family:'Liberation Mono', monospace;transform:scale(0.965,1.17);transform-origin:100% 15.33px;">94.45</div>
<div class="t" style="left:76.30px;top:776.89px;font-size:20.80px;line-height:20.80px;letter-spacing:-0.023px;">Enterprise</div>
<div class="t" style="left:330.13px;top:779.57px;font-size:20.00px;line-height:20.00px;font-family:'Liberation Mono', monospace;transform:scale(0.965,1.17);transform-origin:100% 15.33px;">0.74</div>
<div class="t" style="left:474.77px;top:779.57px;font-size:20.00px;line-height:20.00px;font-family:'Liberation Mono', monospace;transform:scale(0.965,1.17);transform-origin:100% 15.33px;">0.74</div>
<div class="t" style="left:908.69px;top:779.57px;font-size:20.00px;line-height:20.00px;font-family:'Liberation Mono', monospace;transform:scale(0.965,1.17);transform-origin:100% 15.33px;">0.87</div>
<div class="t" style="left:1041.33px;top:779.57px;font-size:20.00px;line-height:20.00px;font-family:'Liberation Mono', monospace;transform:scale(0.965,1.17);transform-origin:100% 15.33px;">-1.33</div>
<div class="t" style="left:1197.97px;top:779.57px;font-size:20.00px;line-height:20.00px;font-family:'Liberation Mono', monospace;transform:scale(0.965,1.17);transform-origin:100% 15.33px;">0.66</div>
<div class="t" style="left:1342.61px;top:779.57px;font-size:20.00px;line-height:20.00px;font-family:'Liberation Mono', monospace;transform:scale(0.965,1.17);transform-origin:100% 15.33px;">0.70</div>
<div class="t" style="left:1463.25px;top:779.57px;font-size:20.00px;line-height:20.00px;font-family:'Liberation Mono', monospace;transform:scale(0.965,1.17);transform-origin:100% 15.33px;">-38.05</div>
<div class="t" style="left:1631.89px;top:779.57px;font-size:20.00px;line-height:20.00px;font-family:'Liberation Mono', monospace;transform:scale(0.965,1.17);transform-origin:100% 15.33px;">1.62</div>
<div class="t" style="left:1776.53px;top:779.57px;font-size:20.00px;line-height:20.00px;font-family:'Liberation Mono', monospace;transform:scale(0.965,1.17);transform-origin:100% 15.33px;">1.67</div>
<div class="t" style="left:1897.17px;top:779.57px;font-size:20.00px;line-height:20.00px;font-family:'Liberation Mono', monospace;transform:scale(0.965,1.17);transform-origin:100% 15.33px;">-57.44</div>
<div class="t" style="left:76.30px;top:809.34px;font-size:20.80px;line-height:20.80px;letter-spacing:0.205px;">Government</div>
<div class="t" style="left:330.13px;top:812.02px;font-size:20.00px;line-height:20.00px;font-family:'Liberation Mono', monospace;transform:scale(0.965,1.17);transform-origin:100% 15.33px;">2.11</div>
<div class="t" style="left:474.77px;top:812.02px;font-size:20.00px;line-height:20.00px;font-family:'Liberation Mono', monospace;transform:scale(0.965,1.17);transform-origin:100% 15.33px;">1.63</div>
<div class="t" style="left:908.69px;top:812.02px;font-size:20.00px;line-height:20.00px;font-family:'Liberation Mono', monospace;transform:scale(0.965,1.17);transform-origin:100% 15.33px;">1.48</div>
<div class="t" style="left:1029.33px;top:812.02px;font-size:20.00px;line-height:20.00px;font-family:'Liberation Mono', monospace;transform:scale(0.965,1.17);transform-origin:100% 15.33px;">437.14</div>
<div class="t" style="left:1197.97px;top:812.02px;font-size:20.00px;line-height:20.00px;font-family:'Liberation Mono', monospace;transform:scale(0.965,1.17);transform-origin:100% 15.33px;">1.98</div>
<div class="t" style="left:1342.61px;top:812.02px;font-size:20.00px;line-height:20.00px;font-family:'Liberation Mono', monospace;transform:scale(0.965,1.17);transform-origin:100% 15.33px;">1.52</div>
<div class="t" style="left:1463.25px;top:812.02px;font-size:20.00px;line-height:20.00px;font-family:'Liberation Mono', monospace;transform:scale(0.965,1.17);transform-origin:100% 15.33px;">456.78</div>
<div class="t" style="left:1631.89px;top:812.02px;font-size:20.00px;line-height:20.00px;font-family:'Liberation Mono', monospace;transform:scale(0.965,1.17);transform-origin:100% 15.33px;">6.12</div>
<div class="t" style="left:1776.53px;top:812.02px;font-size:20.00px;line-height:20.00px;font-family:'Liberation Mono', monospace;transform:scale(0.965,1.17);transform-origin:100% 15.33px;">4.79</div>
<div class="t" style="left:1873.17px;top:812.02px;font-size:20.00px;line-height:20.00px;font-family:'Liberation Mono', monospace;transform:scale(0.965,1.17);transform-origin:100% 15.33px;">1,332.30</div>
<div class="t" style="left:76.30px;top:841.79px;font-size:20.80px;line-height:20.80px;letter-spacing:0.439px;">Midmarket</div>
<div class="t" style="left:330.13px;top:844.47px;font-size:20.00px;line-height:20.00px;font-family:'Liberation Mono', monospace;transform:scale(0.965,1.17);transform-origin:100% 15.33px;">0.12</div>
<div class="t" style="left:474.77px;top:844.47px;font-size:20.00px;line-height:20.00px;font-family:'Liberation Mono', monospace;transform:scale(0.965,1.17);transform-origin:100% 15.33px;">0.09</div>
<div class="t" style="left:908.69px;top:844.47px;font-size:20.00px;line-height:20.00px;font-family:'Liberation Mono', monospace;transform:scale(0.965,1.17);transform-origin:100% 15.33px;">0.11</div>
<div class="t" style="left:1041.33px;top:844.47px;font-size:20.00px;line-height:20.00px;font-family:'Liberation Mono', monospace;transform:scale(0.965,1.17);transform-origin:100% 15.33px;">45.14</div>
<div class="t" style="left:1197.97px;top:844.47px;font-size:20.00px;line-height:20.00px;font-family:'Liberation Mono', monospace;transform:scale(0.965,1.17);transform-origin:100% 15.33px;">0.13</div>
<div class="t" style="left:1342.61px;top:844.47px;font-size:20.00px;line-height:20.00px;font-family:'Liberation Mono', monospace;transform:scale(0.965,1.17);transform-origin:100% 15.33px;">0.09</div>
<div class="t" style="left:1475.25px;top:844.47px;font-size:20.00px;line-height:20.00px;font-family:'Liberation Mono', monospace;transform:scale(0.965,1.17);transform-origin:100% 15.33px;">34.58</div>
<div class="t" style="left:1631.89px;top:844.47px;font-size:20.00px;line-height:20.00px;font-family:'Liberation Mono', monospace;transform:scale(0.965,1.17);transform-origin:100% 15.33px;">0.19</div>
<div class="t" style="left:1776.53px;top:844.47px;font-size:20.00px;line-height:20.00px;font-family:'Liberation Mono', monospace;transform:scale(0.965,1.17);transform-origin:100% 15.33px;">0.14</div>
<div class="t" style="left:1909.17px;top:844.47px;font-size:20.00px;line-height:20.00px;font-family:'Liberation Mono', monospace;transform:scale(0.965,1.17);transform-origin:100% 15.33px;">52.00</div>
<div class="t" style="left:76.30px;top:874.24px;font-size:20.80px;line-height:20.80px;letter-spacing:-0.538px;">Small Business</div>
<div class="t" style="left:330.13px;top:876.92px;font-size:20.00px;line-height:20.00px;font-family:'Liberation Mono', monospace;transform:scale(0.965,1.17);transform-origin:100% 15.33px;">1.61</div>
<div class="t" style="left:474.77px;top:876.92px;font-size:20.00px;line-height:20.00px;font-family:'Liberation Mono', monospace;transform:scale(0.965,1.17);transform-origin:100% 15.33px;">1.47</div>
<div class="t" style="left:908.69px;top:876.92px;font-size:20.00px;line-height:20.00px;font-family:'Liberation Mono', monospace;transform:scale(0.965,1.17);transform-origin:100% 15.33px;">0.90</div>
<div class="t" style="left:1041.33px;top:876.92px;font-size:20.00px;line-height:20.00px;font-family:'Liberation Mono', monospace;transform:scale(0.965,1.17);transform-origin:100% 15.33px;">91.20</div>
<div class="t" style="left:1197.97px;top:876.92px;font-size:20.00px;line-height:20.00px;font-family:'Liberation Mono', monospace;transform:scale(0.965,1.17);transform-origin:100% 15.33px;">1.63</div>
<div class="t" style="left:1342.61px;top:876.92px;font-size:20.00px;line-height:20.00px;font-family:'Liberation Mono', monospace;transform:scale(0.965,1.17);transform-origin:100% 15.33px;">1.42</div>
<div class="t" style="left:1463.25px;top:876.92px;font-size:20.00px;line-height:20.00px;font-family:'Liberation Mono', monospace;transform:scale(0.965,1.17);transform-origin:100% 15.33px;">203.68</div>
<div class="t" style="left:1631.89px;top:876.92px;font-size:20.00px;line-height:20.00px;font-family:'Liberation Mono', monospace;transform:scale(0.965,1.17);transform-origin:100% 15.33px;">3.15</div>
<div class="t" style="left:1776.53px;top:876.92px;font-size:20.00px;line-height:20.00px;font-family:'Liberation Mono', monospace;transform:scale(0.965,1.17);transform-origin:100% 15.33px;">2.85</div>
<div class="t" style="left:1897.17px;top:876.92px;font-size:20.00px;line-height:20.00px;font-family:'Liberation Mono', monospace;transform:scale(0.965,1.17);transform-origin:100% 15.33px;">295.85</div>
<div class="t" style="left:66.50px;top:909.39px;font-size:20.80px;line-height:20.80px;font-weight:bold;letter-spacing:-0.846px;">Germany</div>
<div class="t" style="left:330.13px;top:911.77px;font-size:20.00px;line-height:20.00px;font-family:'Liberation Mono', monospace;font-weight:bold;transform:scale(0.965,1.17);transform-origin:100% 15.33px;">2.70</div>
<div class="t" style="left:474.77px;top:911.77px;font-size:20.00px;line-height:20.00px;font-family:'Liberation Mono', monospace;font-weight:bold;transform:scale(0.965,1.17);transform-origin:100% 15.33px;">2.37</div>
<div class="t" style="left:908.69px;top:911.77px;font-size:20.00px;line-height:20.00px;font-family:'Liberation Mono', monospace;font-weight:bold;transform:scale(0.965,1.17);transform-origin:100% 15.33px;">3.65</div>
<div class="t" style="left:1029.33px;top:911.77px;font-size:20.00px;line-height:20.00px;font-family:'Liberation Mono', monospace;font-weight:bold;transform:scale(0.965,1.17);transform-origin:100% 15.33px;">687.99</div>
<div class="t" style="left:1197.97px;top:911.77px;font-size:20.00px;line-height:20.00px;font-family:'Liberation Mono', monospace;font-weight:bold;transform:scale(0.965,1.17);transform-origin:100% 15.33px;">5.01</div>
<div class="t" style="left:1342.61px;top:911.77px;font-size:20.00px;line-height:20.00px;font-family:'Liberation Mono', monospace;font-weight:bold;transform:scale(0.965,1.17);transform-origin:100% 15.33px;">4.37</div>
<div class="t" style="left:1463.25px;top:911.77px;font-size:20.00px;line-height:20.00px;font-family:'Liberation Mono', monospace;font-weight:bold;transform:scale(0.965,1.17);transform-origin:100% 15.33px;">640.26</div>
<div class="t" style="left:1619.89px;top:911.77px;font-size:20.00px;line-height:20.00px;font-family:'Liberation Mono', monospace;font-weight:bold;transform:scale(0.965,1.17);transform-origin:100% 15.33px;">11.45</div>
<div class="t" style="left:1776.53px;top:911.77px;font-size:20.00px;line-height:20.00px;font-family:'Liberation Mono', monospace;font-weight:bold;transform:scale(0.965,1.17);transform-origin:100% 15.33px;">9.44</div>
<div class="t" style="left:1873.17px;top:911.77px;font-size:20.00px;line-height:20.00px;font-family:'Liberation Mono', monospace;font-weight:bold;transform:scale(0.965,1.17);transform-origin:100% 15.33px;">2,015.63</div>
<div class="t" style="left:76.30px;top:940.99px;font-size:20.80px;line-height:20.80px;letter-spacing:-0.201px;">Channel Partn...</div>
<div class="t" style="left:330.13px;top:943.67px;font-size:20.00px;line-height:20.00px;font-family:'Liberation Mono', monospace;transform:scale(0.965,1.17);transform-origin:100% 15.33px;">0.07</div>
<div class="t" style="left:474.77px;top:943.67px;font-size:20.00px;line-height:20.00px;font-family:'Liberation Mono', monospace;transform:scale(0.965,1.17);transform-origin:100% 15.33px;">0.02</div>
<div class="t" style="left:908.69px;top:943.67px;font-size:20.00px;line-height:20.00px;font-family:'Liberation Mono', monospace;transform:scale(0.965,1.17);transform-origin:100% 15.33px;">0.02</div>
<div class="t" style="left:1041.33px;top:943.67px;font-size:20.00px;line-height:20.00px;font-family:'Liberation Mono', monospace;transform:scale(0.965,1.17);transform-origin:100% 15.33px;">60.32</div>
<div class="t" style="left:1197.97px;top:943.67px;font-size:20.00px;line-height:20.00px;font-family:'Liberation Mono', monospace;transform:scale(0.965,1.17);transform-origin:100% 15.33px;">0.07</div>
<div class="t" style="left:1342.61px;top:943.67px;font-size:20.00px;line-height:20.00px;font-family:'Liberation Mono', monospace;transform:scale(0.965,1.17);transform-origin:100% 15.33px;">0.02</div>
<div class="t" style="left:1475.25px;top:943.67px;font-size:20.00px;line-height:20.00px;font-family:'Liberation Mono', monospace;transform:scale(0.965,1.17);transform-origin:100% 15.33px;">53.97</div>
<div class="t" style="left:1631.89px;top:943.67px;font-size:20.00px;line-height:20.00px;font-family:'Liberation Mono', monospace;transform:scale(0.965,1.17);transform-origin:100% 15.33px;">0.11</div>
<div class="t" style="left:1776.53px;top:943.67px;font-size:20.00px;line-height:20.00px;font-family:'Liberation Mono', monospace;transform:scale(0.965,1.17);transform-origin:100% 15.33px;">0.03</div>
<div class="t" style="left:1909.17px;top:943.67px;font-size:20.00px;line-height:20.00px;font-family:'Liberation Mono', monospace;transform:scale(0.965,1.17);transform-origin:100% 15.33px;">82.83</div>
<div class="t" style="left:76.30px;top:973.44px;font-size:20.80px;line-height:20.80px;letter-spacing:-0.023px;">Enterprise</div>
<div class="t" style="left:330.13px;top:976.12px;font-size:20.00px;line-height:20.00px;font-family:'Liberation Mono', monospace;transform:scale(0.965,1.17);transform-origin:100% 15.33px;">0.54</div>
<div class="t" style="left:474.77px;top:976.12px;font-size:20.00px;line-height:20.00px;font-family:'Liberation Mono', monospace;transform:scale(0.965,1.17);transform-origin:100% 15.33px;">0.57</div>
<div class="t" style="left:595.41px;top:976.12px;font-size:20.00px;line-height:20.00px;font-family:'Liberation Mono', monospace;transform:scale(0.965,1.17);transform-origin:100% 15.33px;">-28.70</div>
<div class="t" style="left:764.05px;top:976.12px;font-size:20.00px;line-height:20.00px;font-family:'Liberation Mono', monospace;transform:scale(0.965,1.17);transform-origin:100% 15.33px;">1.19</div>
<div class="t" style="left:908.69px;top:976.12px;font-size:20.00px;line-height:20.00px;font-family:'Liberation Mono', monospace;transform:scale(0.965,1.17);transform-origin:100% 15.33px;">1.16</div>
<div class="t" style="left:1041.33px;top:976.12px;font-size:20.00px;line-height:20.00px;font-family:'Liberation Mono', monospace;transform:scale(0.965,1.17);transform-origin:100% 15.33px;">30.71</div>
<div class="t" style="left:1197.97px;top:976.12px;font-size:20.00px;line-height:20.00px;font-family:'Liberation Mono', monospace;transform:scale(0.965,1.17);transform-origin:100% 15.33px;">1.06</div>
<div class="t" style="left:1342.61px;top:976.12px;font-size:20.00px;line-height:20.00px;font-family:'Liberation Mono', monospace;transform:scale(0.965,1.17);transform-origin:100% 15.33px;">1.12</div>
<div class="t" style="left:1463.25px;top:976.12px;font-size:20.00px;line-height:20.00px;font-family:'Liberation Mono', monospace;transform:scale(0.965,1.17);transform-origin:100% 15.33px;">-62.77</div>
<div class="t" style="left:1631.89px;top:976.12px;font-size:20.00px;line-height:20.00px;font-family:'Liberation Mono', monospace;transform:scale(0.965,1.17);transform-origin:100% 15.33px;">1.30</div>
<div class="t" style="left:1776.53px;top:976.12px;font-size:20.00px;line-height:20.00px;font-family:'Liberation Mono', monospace;transform:scale(0.965,1.17);transform-origin:100% 15.33px;">1.34</div>
<div class="t" style="left:1897.17px;top:976.12px;font-size:20.00px;line-height:20.00px;font-family:'Liberation Mono', monospace;transform:scale(0.965,1.17);transform-origin:100% 15.33px;">-40.71</div>
<div class="t" style="left:76.30px;top:1005.89px;font-size:20.80px;line-height:20.80px;letter-spacing:0.205px;">Government</div>
<div class="t" style="left:330.13px;top:1008.57px;font-size:20.00px;line-height:20.00px;font-family:'Liberation Mono', monospace;transform:scale(0.965,1.17);transform-origin:100% 15.33px;">1.05</div>
<div class="t" style="left:474.77px;top:1008.57px;font-size:20.00px;line-height:20.00px;font-family:'Liberation Mono', monospace;transform:scale(0.965,1.17);transform-origin:100% 15.33px;">0.83</div>
<div class="t" style="left:595.41px;top:1008.57px;font-size:20.00px;line-height:20.00px;font-family:'Liberation Mono', monospace;transform:scale(0.965,1.17);transform-origin:100% 15.33px;">225.74</div>
<div class="t" style="left:764.05px;top:1008.57px;font-size:20.00px;line-height:20.00px;font-family:'Liberation Mono', monospace;transform:scale(0.965,1.17);transform-origin:100% 15.33px;">1.70</div>
<div class="t" style="left:908.69px;top:1008.57px;font-size:20.00px;line-height:20.00px;font-family:'Liberation Mono', monospace;transform:scale(0.965,1.17);transform-origin:100% 15.33px;">1.31</div>
<div class="t" style="left:1029.33px;top:1008.57px;font-size:20.00px;line-height:20.00px;font-family:'Liberation Mono', monospace;transform:scale(0.965,1.17);transform-origin:100% 15.33px;">393.74</div>
<div class="t" style="left:1197.97px;top:1008.57px;font-size:20.00px;line-height:20.00px;font-family:'Liberation Mono', monospace;transform:scale(0.965,1.17);transform-origin:100% 15.33px;">1.93</div>
<div class="t" style="left:1342.61px;top:1008.57px;font-size:20.00px;line-height:20.00px;font-family:'Liberation Mono', monospace;transform:scale(0.965,1.17);transform-origin:100% 15.33px;">1.49</div>
<div class="t" style="left:1463.25px;top:1008.57px;font-size:20.00px;line-height:20.00px;font-family:'Liberation Mono', monospace;transform:scale(0.965,1.17);transform-origin:100% 15.33px;">437.59</div>
<div class="t" style="left:1631.89px;top:1008.57px;font-size:20.00px;line-height:20.00px;font-family:'Liberation Mono', monospace;transform:scale(0.965,1.17);transform-origin:100% 15.33px;">6.77</div>
<div class="t" style="left:1776.53px;top:1008.57px;font-size:20.00px;line-height:20.00px;font-family:'Liberation Mono', monospace;transform:scale(0.965,1.17);transform-origin:100% 15.33px;">5.15</div>
<div class="t" style="left:1873.17px;top:1008.57px;font-size:20.00px;line-height:20.00px;font-family:'Liberation Mono', monospace;transform:scale(0.965,1.17);transform-origin:100% 15.33px;">1,620.10</div>
<div class="t" style="left:76.30px;top:1038.34px;font-size:20.80px;line-height:20.80px;letter-spacing:0.439px;">Midmarket</div>
<div class="t" style="left:330.13px;top:1041.02px;font-size:20.00px;line-height:20.00px;font-family:'Liberation Mono', monospace;transform:scale(0.965,1.17);transform-origin:100% 15.33px;">0.03</div>
<div class="t" style="left:474.77px;top:1041.02px;font-size:20.00px;line-height:20.00px;font-family:'Liberation Mono', monospace;transform:scale(0.965,1.17);transform-origin:100% 15.33px;">0.02</div>
<div class="t" style="left:619.41px;top:1041.02px;font-size:20.00px;line-height:20.00px;font-family:'Liberation Mono', monospace;transform:scale(0.965,1.17);transform-origin:100% 15.33px;">7.79</div>
<div class="t" style="left:764.05px;top:1041.02px;font-size:20.00px;line-height:20.00px;font-family:'Liberation Mono', monospace;transform:scale(0.965,1.17);transform-origin:100% 15.33px;">0.06</div>
<div class="t" style="left:908.69px;top:1041.02px;font-size:20.00px;line-height:20.00px;font-family:'Liberation Mono', monospace;transform:scale(0.965,1.17);transform-origin:100% 15.33px;">0.04</div>
<div class="t" style="left:1041.33px;top:1041.02px;font-size:20.00px;line-height:20.00px;font-family:'Liberation Mono', monospace;transform:scale(0.965,1.17);transform-origin:100% 15.33px;">16.94</div>
<div class="t" style="left:1197.97px;top:1041.02px;font-size:20.00px;line-height:20.00px;font-family:'Liberation Mono', monospace;transform:scale(0.965,1.17);transform-origin:100% 15.33px;">0.05</div>
<div class="t" style="left:1342.61px;top:1041.02px;font-size:20.00px;line-height:20.00px;font-family:'Liberation Mono', monospace;transform:scale(0.965,1.17);transform-origin:100% 15.33px;">0.04</div>
<div class="t" style="left:1475.25px;top:1041.02px;font-size:20.00px;line-height:20.00px;font-family:'Liberation Mono', monospace;transform:scale(0.965,1.17);transform-origin:100% 15.33px;">14.14</div>
<div class="t" style="left:1631.89px;top:1041.02px;font-size:20.00px;line-height:20.00px;font-family:'Liberation Mono', monospace;transform:scale(0.965,1.17);transform-origin:100% 15.33px;">0.17</div>
<div class="t" style="left:1776.53px;top:1041.02px;font-size:20.00px;line-height:20.00px;font-family:'Liberation Mono', monospace;transform:scale(0.965,1.17);transform-origin:100% 15.33px;">0.12</div>
<div class="t" style="left:1909.17px;top:1041.02px;font-size:20.00px;line-height:20.00px;font-family:'Liberation Mono', monospace;transform:scale(0.965,1.17);transform-origin:100% 15.33px;">46.49</div>
<div class="t" style="left:76.30px;top:1070.79px;font-size:20.80px;line-height:20.80px;letter-spacing:-0.538px;">Small Business</div>
<div class="t" style="left:330.13px;top:1073.47px;font-size:20.00px;line-height:20.00px;font-family:'Liberation Mono', monospace;transform:scale(0.965,1.17);transform-origin:100% 15.33px;">1.01</div>
<div class="t" style="left:474.77px;top:1073.47px;font-size:20.00px;line-height:20.00px;font-family:'Liberation Mono', monospace;transform:scale(0.965,1.17);transform-origin:100% 15.33px;">0.93</div>
<div class="t" style="left:607.41px;top:1073.47px;font-size:20.00px;line-height:20.00px;font-family:'Liberation Mono', monospace;transform:scale(0.965,1.17);transform-origin:100% 15.33px;">81.43</div>
<div class="t" style="left:764.05px;top:1073.47px;font-size:20.00px;line-height:20.00px;font-family:'Liberation Mono', monospace;transform:scale(0.965,1.17);transform-origin:100% 15.33px;">1.32</div>
<div class="t" style="left:908.69px;top:1073.47px;font-size:20.00px;line-height:20.00px;font-family:'Liberation Mono', monospace;transform:scale(0.965,1.17);transform-origin:100% 15.33px;">1.13</div>
<div class="t" style="left:1029.33px;top:1073.47px;font-size:20.00px;line-height:20.00px;font-family:'Liberation Mono', monospace;transform:scale(0.965,1.17);transform-origin:100% 15.33px;">186.28</div>
<div class="t" style="left:1197.97px;top:1073.47px;font-size:20.00px;line-height:20.00px;font-family:'Liberation Mono', monospace;transform:scale(0.965,1.17);transform-origin:100% 15.33px;">1.89</div>
<div class="t" style="left:1342.61px;top:1073.47px;font-size:20.00px;line-height:20.00px;font-family:'Liberation Mono', monospace;transform:scale(0.965,1.17);transform-origin:100% 15.33px;">1.69</div>
<div class="t" style="left:1463.25px;top:1073.47px;font-size:20.00px;line-height:20.00px;font-family:'Liberation Mono', monospace;transform:scale(0.965,1.17);transform-origin:100% 15.33px;">197.34</div>
<div class="t" style="left:1631.89px;top:1073.47px;font-size:20.00px;line-height:20.00px;font-family:'Liberation Mono', monospace;transform:scale(0.965,1.17);transform-origin:100% 15.33px;">3.11</div>
<div class="t" style="left:1776.53px;top:1073.47px;font-size:20.00px;line-height:20.00px;font-family:'Liberation Mono', monospace;transform:scale(0.965,1.17);transform-origin:100% 15.33px;">2.80</div>
<div class="t" style="left:1897.17px;top:1073.47px;font-size:20.00px;line-height:20.00px;font-family:'Liberation Mono', monospace;transform:scale(0.965,1.17);transform-origin:100% 15.33px;">306.92</div>
<div class="t" style="left:66.50px;top:1105.94px;font-size:20.80px;line-height:20.80px;font-weight:bold;letter-spacing:-0.503px;">Mexico</div>
<div class="t" style="left:330.13px;top:1108.32px;font-size:20.00px;line-height:20.00px;font-family:'Liberation Mono', monospace;font-weight:bold;transform:scale(0.965,1.17);transform-origin:100% 15.33px;">4.20</div>
<div class="t" style="left:474.77px;top:1108.32px;font-size:20.00px;line-height:20.00px;font-family:'Liberation Mono', monospace;font-weight:bold;transform:scale(0.965,1.17);transform-origin:100% 15.33px;">3.56</div>
<div class="t" style="left:595.41px;top:1108.32px;font-size:20.00px;line-height:20.00px;font-family:'Liberation Mono', monospace;font-weight:bold;transform:scale(0.965,1.17);transform-origin:100% 15.33px;">639.57</div>
<div class="t" style="left:764.05px;top:1108.32px;font-size:20.00px;line-height:20.00px;font-family:'Liberation Mono', monospace;font-weight:bold;transform:scale(0.965,1.17);transform-origin:100% 15.33px;">4.35</div>
<div class="t" style="left:908.69px;top:1108.32px;font-size:20.00px;line-height:20.00px;font-family:'Liberation Mono', monospace;font-weight:bold;transform:scale(0.965,1.17);transform-origin:100% 15.33px;">3.76</div>
<div class="t" style="left:1029.33px;top:1108.32px;font-size:20.00px;line-height:20.00px;font-family:'Liberation Mono', monospace;font-weight:bold;transform:scale(0.965,1.17);transform-origin:100% 15.33px;">596.92</div>
<div class="t" style="left:1197.97px;top:1108.32px;font-size:20.00px;line-height:20.00px;font-family:'Liberation Mono', monospace;font-weight:bold;transform:scale(0.965,1.17);transform-origin:100% 15.33px;">3.67</div>
<div class="t" style="left:1342.61px;top:1108.32px;font-size:20.00px;line-height:20.00px;font-family:'Liberation Mono', monospace;font-weight:bold;transform:scale(0.965,1.17);transform-origin:100% 15.33px;">3.11</div>
<div class="t" style="left:1463.25px;top:1108.32px;font-size:20.00px;line-height:20.00px;font-family:'Liberation Mono', monospace;font-weight:bold;transform:scale(0.965,1.17);transform-origin:100% 15.33px;">568.40</div>
<div class="t" style="left:1631.89px;top:1108.32px;font-size:20.00px;line-height:20.00px;font-family:'Liberation Mono', monospace;font-weight:bold;transform:scale(0.965,1.17);transform-origin:100% 15.33px;">8.72</div>
<div class="t" style="left:1776.53px;top:1108.32px;font-size:20.00px;line-height:20.00px;font-family:'Liberation Mono', monospace;font-weight:bold;transform:scale(0.965,1.17);transform-origin:100% 15.33px;">7.62</div>
<div class="t" style="left:1873.17px;top:1108.32px;font-size:20.00px;line-height:20.00px;font-family:'Liberation Mono', monospace;font-weight:bold;transform:scale(0.965,1.17);transform-origin:100% 15.33px;">1,102.64</div>
<div class="t" style="left:76.30px;top:1137.54px;font-size:20.80px;line-height:20.80px;letter-spacing:-0.201px;">Channel Partn...</div>
<div class="t" style="left:330.13px;top:1140.22px;font-size:20.00px;line-height:20.00px;font-family:'Liberation Mono', monospace;transform:scale(0.965,1.17);transform-origin:100% 15.33px;">0.04</div>
<div class="t" style="left:474.77px;top:1140.22px;font-size:20.00px;line-height:20.00px;font-family:'Liberation Mono', monospace;transform:scale(0.965,1.17);transform-origin:100% 15.33px;">0.01</div>
<div class="t" style="left:607.41px;top:1140.22px;font-size:20.00px;line-height:20.00px;font-family:'Liberation Mono', monospace;transform:scale(0.965,1.17);transform-origin:100% 15.33px;">28.63</div>
<div class="t" style="left:764.05px;top:1140.22px;font-size:20.00px;line-height:20.00px;font-family:'Liberation Mono', monospace;transform:scale(0.965,1.17);transform-origin:100% 15.33px;">0.06</div>
<div class="t" style="left:908.69px;top:1140.22px;font-size:20.00px;line-height:20.00px;font-family:'Liberation Mono', monospace;transform:scale(0.965,1.17);transform-origin:100% 15.33px;">0.02</div>
<div class="t" style="left:1041.33px;top:1140.22px;font-size:20.00px;line-height:20.00px;font-family:'Liberation Mono', monospace;transform:scale(0.965,1.17);transform-origin:100% 15.33px;">45.66</div>
<div class="t" style="left:1197.97px;top:1140.22px;font-size:20.00px;line-height:20.00px;font-family:'Liberation Mono', monospace;transform:scale(0.965,1.17);transform-origin:100% 15.33px;">0.04</div>
<div class="t" style="left:1342.61px;top:1140.22px;font-size:20.00px;line-height:20.00px;font-family:'Liberation Mono', monospace;transform:scale(0.965,1.17);transform-origin:100% 15.33px;">0.01</div>
<div class="t" style="left:1475.25px;top:1140.22px;font-size:20.00px;line-height:20.00px;font-family:'Liberation Mono', monospace;transform:scale(0.965,1.17);transform-origin:100% 15.33px;">26.05</div>
<div class="t" style="left:1631.89px;top:1140.22px;font-size:20.00px;line-height:20.00px;font-family:'Liberation Mono', monospace;transform:scale(0.965,1.17);transform-origin:100% 15.33px;">0.10</div>
<div class="t" style="left:1776.53px;top:1140.22px;font-size:20.00px;line-height:20.00px;font-family:'Liberation Mono', monospace;transform:scale(0.965,1.17);transform-origin:100% 15.33px;">0.03</div>
<div class="t" style="left:1909.17px;top:1140.22px;font-size:20.00px;line-height:20.00px;font-family:'Liberation Mono', monospace;transform:scale(0.965,1.17);transform-origin:100% 15.33px;">70.55</div>
<div class="t" style="left:76.30px;top:1169.99px;font-size:20.80px;line-height:20.80px;letter-spacing:-0.023px;">Enterprise</div>
<div class="t" style="left:330.13px;top:1172.67px;font-size:20.00px;line-height:20.00px;font-family:'Liberation Mono', monospace;transform:scale(0.965,1.17);transform-origin:100% 15.33px;">0.36</div>
<div class="t" style="left:474.77px;top:1172.67px;font-size:20.00px;line-height:20.00px;font-family:'Liberation Mono', monospace;transform:scale(0.965,1.17);transform-origin:100% 15.33px;">0.39</div>
<div class="t" style="left:595.41px;top:1172.67px;font-size:20.00px;line-height:20.00px;font-family:'Liberation Mono', monospace;transform:scale(0.965,1.17);transform-origin:100% 15.33px;">-30.11</div>
<div class="t" style="left:764.05px;top:1172.67px;font-size:20.00px;line-height:20.00px;font-family:'Liberation Mono', monospace;transform:scale(0.965,1.17);transform-origin:100% 15.33px;">0.33</div>
<div class="t" style="left:908.69px;top:1172.67px;font-size:20.00px;line-height:20.00px;font-family:'Liberation Mono', monospace;transform:scale(0.965,1.17);transform-origin:100% 15.33px;">0.33</div>
<div class="t" style="left:1053.33px;top:1172.67px;font-size:20.00px;line-height:20.00px;font-family:'Liberation Mono', monospace;transform:scale(0.965,1.17);transform-origin:100% 15.33px;">0.75</div>
<div class="t" style="left:1197.97px;top:1172.67px;font-size:20.00px;line-height:20.00px;font-family:'Liberation Mono', monospace;transform:scale(0.965,1.17);transform-origin:100% 15.33px;">0.75</div>
<div class="t" style="left:1342.61px;top:1172.67px;font-size:20.00px;line-height:20.00px;font-family:'Liberation Mono', monospace;transform:scale(0.965,1.17);transform-origin:100% 15.33px;">0.77</div>
<div class="t" style="left:1463.25px;top:1172.67px;font-size:20.00px;line-height:20.00px;font-family:'Liberation Mono', monospace;transform:scale(0.965,1.17);transform-origin:100% 15.33px;">-22.34</div>
<div class="t" style="left:1631.89px;top:1172.67px;font-size:20.00px;line-height:20.00px;font-family:'Liberation Mono', monospace;transform:scale(0.965,1.17);transform-origin:100% 15.33px;">1.88</div>
<div class="t" style="left:1776.53px;top:1172.67px;font-size:20.00px;line-height:20.00px;font-family:'Liberation Mono', monospace;transform:scale(0.965,1.17);transform-origin:100% 15.33px;">1.95</div>
<div class="t" style="left:1897.17px;top:1172.67px;font-size:20.00px;line-height:20.00px;font-family:'Liberation Mono', monospace;transform:scale(0.965,1.17);transform-origin:100% 15.33px;">-68.99</div>
<div class="t" style="left:76.30px;top:1202.44px;font-size:20.80px;line-height:20.80px;letter-spacing:0.205px;">Government</div>
<div class="t" style="left:330.13px;top:1205.12px;font-size:20.00px;line-height:20.00px;font-family:'Liberation Mono', monospace;transform:scale(0.965,1.17);transform-origin:100% 15.33px;">1.92</div>
<div class="t" style="left:474.77px;top:1205.12px;font-size:20.00px;line-height:20.00px;font-family:'Liberation Mono', monospace;transform:scale(0.965,1.17);transform-origin:100% 15.33px;">1.50</div>
<div class="t" style="left:595.41px;top:1205.12px;font-size:20.00px;line-height:20.00px;font-family:'Liberation Mono', monospace;transform:scale(0.965,1.17);transform-origin:100% 15.33px;">426.18</div>
<div class="t" style="left:764.05px;top:1205.12px;font-size:20.00px;line-height:20.00px;font-family:'Liberation Mono', monospace;transform:scale(0.965,1.17);transform-origin:100% 15.33px;">1.87</div>
<div class="t" style="left:908.69px;top:1205.12px;font-size:20.00px;line-height:20.00px;font-family:'Liberation Mono', monospace;transform:scale(0.965,1.17);transform-origin:100% 15.33px;">1.55</div>
<div class="t" style="left:1029.33px;top:1205.12px;font-size:20.00px;line-height:20.00px;font-family:'Liberation Mono', monospace;transform:scale(0.965,1.17);transform-origin:100% 15.33px;">319.33</div>
<div class="t" style="left:1197.97px;top:1205.12px;font-size:20.00px;line-height:20.00px;font-family:'Liberation Mono', monospace;transform:scale(0.965,1.17);transform-origin:100% 15.33px;">1.96</div>
<div class="t" style="left:1342.61px;top:1205.12px;font-size:20.00px;line-height:20.00px;font-family:'Liberation Mono', monospace;transform:scale(0.965,1.17);transform-origin:100% 15.33px;">1.52</div>
<div class="t" style="left:1463.25px;top:1205.12px;font-size:20.00px;line-height:20.00px;font-family:'Liberation Mono', monospace;transform:scale(0.965,1.17);transform-origin:100% 15.33px;">438.89</div>
<div class="t" style="left:1631.89px;top:1205.12px;font-size:20.00px;line-height:20.00px;font-family:'Liberation Mono', monospace;transform:scale(0.965,1.17);transform-origin:100% 15.33px;">4.03</div>
<div class="t" style="left:1776.53px;top:1205.12px;font-size:20.00px;line-height:20.00px;font-family:'Liberation Mono', monospace;transform:scale(0.965,1.17);transform-origin:100% 15.33px;">3.18</div>
<div class="t" style="left:1897.17px;top:1205.12px;font-size:20.00px;line-height:20.00px;font-family:'Liberation Mono', monospace;transform:scale(0.965,1.17);transform-origin:100% 15.33px;">854.76</div>
<div class="b" style="left:543.20px;top:408.30px;width:360.60px;height:564.70px;background:#ffffff;box-shadow:0 1px 6px rgba(0,0,0,0.28);"></div>
<div class="b" style="left:724.00px;top:408.30px;width:179.80px;height:41.90px;background:#f3f3f3;"></div>
<div class="b" style="left:545.00px;top:446.60px;width:178.60px;height:3.50px;background:#0f6cbd;"></div>
<div class="b" style="left:545.00px;top:537.00px;width:358.80px;height:43.00px;background:#f3f3f3;"></div>
<div class="b" style="left:548.00px;top:531.80px;width:267.20px;height:55.20px;border:2px solid #d9262f;box-sizing:border-box;border-radius:6px;box-shadow:inset 0 0 4px rgba(0,0,0,0.12);"></div>
<div class="b" style="left:545.00px;top:797.30px;width:358.80px;height:1.30px;background:#e3e3e3;"></div>
<div class="b" style="left:545.00px;top:841.50px;width:358.80px;height:1.30px;background:#e3e3e3;"></div>
<div class="b" style="left:560.00px;top:492.50px;width:330.00px;height:0.80px;background:#f6f6f6;"></div>
<div class="t" style="left:609.00px;top:463.17px;font-size:17.40px;line-height:17.40px;color:#3b3a39;">Sort</div>
<div class="t" style="left:609.00px;top:507.17px;font-size:17.40px;line-height:17.40px;color:#3b3a39;">Insert</div>
<div class="t" style="left:609.00px;top:550.07px;font-size:17.40px;line-height:17.40px;color:#3b3a39;">Change to visual column</div>
<div class="t" style="left:609.00px;top:592.97px;font-size:17.40px;line-height:17.40px;color:#3b3a39;">Pin Column</div>
<div class="t" style="left:609.00px;top:635.97px;font-size:17.40px;line-height:17.40px;color:#3b3a39;">Ignore Measure in Null Suppression</div>
<div class="t" style="left:609.00px;top:678.87px;font-size:17.40px;line-height:17.40px;color:#3b3a39;">Stick Measure to Last</div>
<div class="t" style="left:609.00px;top:723.27px;font-size:17.40px;line-height:17.40px;color:#3b3a39;">Hide Column</div>
<div class="t" style="left:609.00px;top:766.27px;font-size:17.40px;line-height:17.40px;color:#3b3a39;">Aggregation</div>
<div class="t" style="left:609.00px;top:810.57px;font-size:17.40px;line-height:17.40px;color:#3b3a39;">Select Measure</div>
<div class="t" style="left:609.00px;top:855.17px;font-size:17.40px;line-height:17.40px;color:#3b3a39;">Select Header</div>
<div class="t" style="left:609.00px;top:899.27px;font-size:17.40px;line-height:17.40px;color:#3b3a39;">Number Formatting</div>
<div class="t" style="left:609.00px;top:943.37px;font-size:17.40px;line-height:17.40px;color:#3b3a39;">Semantic Formatting</div>
<div class="t" style="left:565.50px;top:895.02px;font-size:21.00px;line-height:21.00px;color:#333;letter-spacing:-0.097px;">1.2</div>
<div class="b" style="left:2.00px;top:1241.50px;width:2296.00px;height:1.30px;background:#e2e2e2;"></div>
<div class="t" style="left:2.00px;top:1255.26px;font-size:20.60px;line-height:20.60px;letter-spacing:0.069px;">Total Rows: 31</div>
<div class="b" style="left:1635.40px;top:1252.60px;width:98.20px;height:35.50px;background:#fff;border:2px solid #bdbdbd;box-sizing:border-box;border-radius:2px;"></div>
<div class="t" style="left:1658.00px;top:1262.07px;font-size:20.00px;line-height:20.00px;font-family:'Liberation Mono', monospace;color:#333;letter-spacing:-1.502px;transform:scaleY(1.16);transform-origin:0 15.33px;">100</div>
<div class="t" style="left:1694.50px;top:1260.47px;font-size:20.00px;line-height:20.00px;color:#333;transform:scaleY(1.1);transform-origin:0 16.93px;">%</div>
<div class="t" style="left:1850.70px;top:1255.02px;font-size:21.00px;line-height:21.00px;letter-spacing:-2.049px;">Page</div>
<div class="b" style="left:1901.50px;top:1248.20px;width:45.00px;height:34.90px;background:#fff;border:1.2px solid #dcdcdc;box-sizing:border-box;"></div>
<div class="t" style="left:1919.50px;top:1255.02px;font-size:21.00px;line-height:21.00px;">1</div>
<div class="t" style="left:1955.00px;top:1255.02px;font-size:21.00px;line-height:21.00px;letter-spacing:-0.276px;">of 2</div>
<div class="t" style="left:2128.80px;top:1255.22px;font-size:21.00px;line-height:21.00px;letter-spacing:1.228px;">1 to 23 of 31</div>
<div class="b" style="left:2300.00px;top:1284.00px;width:4.00px;height:8.00px;background:#9a9a9a;"></div>
<div class="b" style="left:2300.50px;top:637.00px;width:3.50px;height:17.00px;background:#999;"></div>
<svg id="ov" width="2304" height="1292" viewBox="0 0 2304 1292"><path d="M1250.00,34.00 L1256.90,42.00 L1263.80,34.00" fill="none" stroke="#252423" stroke-width="2.3" stroke-linecap="round" stroke-linejoin="round"/><path d="M1048.1,54 H1038.5 V22.3 H1069.3 V30.3 M1054,22.3 V38.3" fill="none" stroke="#333" stroke-width="1.9"/><path d="M1052.6,53.6 L1053,47.8 L1064.3,36.5 Q1067.3,33.6 1070.2,36.4 Q1072.8,39.2 1070,42 L1058.6,53.3 Z" fill="none" stroke="#0f4fa0" stroke-width="2.3" stroke-linejoin="round"/><path d="M1062.5,38.3 L1068.2,44" stroke="#0f4fa0" stroke-width="1.7"/><path d="M1823.00,33.00 L1829.50,41.00 L1836.00,33.00" fill="none" stroke="#252423" stroke-width="2.3" stroke-linecap="round" stroke-linejoin="round"/><path d="M1660,38 V45 L1669,45 L1669.5,51 L1675,45 L1692,45 V22 H1681" fill="none" stroke="#999" stroke-width="1.5"/><path d="M1662,27.5 H1678 M1670,19.5 V35.5" stroke="#7a9cc8" stroke-width="1.5"/><defs><clipPath id="avc"><circle cx="1930" cy="39.5" r="21.5"/></clipPath></defs><g clip-path="url(#avc)"><rect x="1908" y="18" width="44" height="44" fill="#9c8f7a"/><rect x="1908" y="18" width="14" height="44" fill="#a89882"/><path d="M1938,18 H1952 V50 L1940,44 Z" fill="#8fae5e"/><path d="M1942,26 Q1950,30 1952,40 L1946,46 Z" fill="#b6d36e"/><path d="M1908,38 Q1914,34 1918,40 L1916,48 L1908,46 Z" fill="#d9834a"/><path d="M1912,62 Q1914,49 1930,47 Q1946,49 1949,62 Z" fill="#d6dff0"/><ellipse cx="1931" cy="37.5" rx="7.3" ry="9.5" fill="#a87458"/><path d="M1922.5,38 Q1921,22 1931,21.5 Q1941,22 1940,37 Q1939,29 1933,27 Q1926,28 1924,34 Z" fill="#221915"/><path d="M1940,34 Q1944,42 1941,50 L1938,44 Z" fill="#2a1f1a"/></g><path d="M1966.00,35.00 L1973.00,43.00 L1980.00,35.00" fill="none" stroke="#252423" stroke-width="2.3" stroke-linecap="round" stroke-linejoin="round"/><path d="M2167.5,19.5 L2174,13" stroke="#555" stroke-width="1.4"/><path d="M2177,4 L2184,10.5 L2179.5,13.5 L2175.5,18 L2168.5,11 L2173,8 Z" fill="none" stroke="#555" stroke-width="1.3" stroke-linejoin="round"/><path d="M2205,6.4 H2221 M2207.7,12.1 H2218.2 M2210.3,17.4 H2215.6" stroke="#555" stroke-width="1.4"/><path d="M2249,5.5 H2245 Q2242,5.5 2242,8.5 V18.5 Q2242,21.5 2245,21.5 H2255 Q2258,21.5 2258,18.5 V15" fill="none" stroke="#555" stroke-width="1.4"/><path d="M2242,14 H2249 V21.5" fill="none" stroke="#555" stroke-width="1.4"/><path d="M2251,5.6 H2258 V12.5 M2258,5.6 L2251.5,12" fill="none" stroke="#555" stroke-width="1.4"/><circle cx="2281.5" cy="11.8" r="1.5" fill="#666"/><circle cx="2287.5" cy="11.8" r="1.5" fill="#666"/><circle cx="2293.5" cy="11.8" r="1.5" fill="#666"/><rect x="34.5" y="81.5" width="6.5" height="6.5" fill="#7fb2e5" stroke="#1a56a8" stroke-width="1.5"/><path d="M44,85.3 H65.5 M51.3,97.2 H65.5 M51.3,109 H65.5" stroke="#333" stroke-width="1.5"/><rect x="41.5" y="94.8" width="5.6" height="5.2" fill="none" stroke="#333" stroke-width="1.4"/><rect x="41.5" y="106.7" width="5.6" height="5.6" fill="none" stroke="#333" stroke-width="1.4"/><path d="M45.00,161.00 L51.90,168.50 L58.80,161.00" fill="none" stroke="#252423" stroke-width="2.3" stroke-linecap="round" stroke-linejoin="round"/><path d="M290.30,94.00 L298.15,102.40 L306.00,94.00" fill="none" stroke="#333" stroke-width="1.3" stroke-linecap="round" stroke-linejoin="round"/><path d="M403.70,94.00 L411.85,102.40 L420.00,94.00" fill="none" stroke="#333" stroke-width="1.3" stroke-linecap="round" stroke-linejoin="round"/><path d="M477.00,85.00 L482.50,79.50 L488.00,85.00" fill="none" stroke="#1a56a8" stroke-width="1.6" stroke-linecap="round" stroke-linejoin="round"/><path d="M528.00,86.50 L533.50,92.00 L539.00,86.50" fill="none" stroke="#1a56a8" stroke-width="1.6" stroke-linecap="round" stroke-linejoin="round"/><path d="M103.5,159.2 L115,171 L123.5,162.3 Z" fill="#a9cdf0"/><path d="M103.5,159.2 L123.5,162.3" stroke="#7f9cc0" stroke-width="1.4"/><path d="M103,158.7 L117,145.4 Q119,144 120.5,145.8 L122,148.3 L129,141.5 Q131.5,140 133,142.5 Q133.6,144.5 132,146 L124.8,152.8 L126.5,154.5 Q128,156.5 126.5,158.5 L115,171.2 Z" fill="none" stroke="#8a8a8a" stroke-width="1.5" stroke-linejoin="round"/><path d="M103.5,159.2 L115,171.2 L124,162" fill="none" stroke="#7f9cc0" stroke-width="1.5"/><path d="M115.5,149.5 L123.5,157.8" stroke="#7f9cc0" stroke-width="1.3"/><path d="M210,146 H225 M205.5,167.5 H220 M217.5,146 L213,167.5" stroke="#a0a0a0" stroke-width="1.6"/><path d="M244.5,146 V159 Q244.5,165 251,165 Q257.5,165 257.5,159 V146" fill="none" stroke="#a0a0a0" stroke-width="1.8"/><path d="M242,168.5 H260" stroke="#a0a0a0" stroke-width="1.4"/><path d="M296,143 L311,152" stroke="#999" stroke-width="1.4"/><path d="M290,158 L300,149 L313,158 L303,167 Z" fill="none" stroke="#999" stroke-width="1.4"/><path d="M290,158 H313" stroke="#999" stroke-width="1.4"/><path d="M315.5,160.5 Q318,164 318,166 Q318,168 315.5,168 Q313,168 313,166 Q313,164 315.5,160.5 Z" fill="none" stroke="#999" stroke-width="1.2"/><rect x="286" y="167" width="36" height="7" fill="#f5f35a"/><path d="M326.00,152.00 L333.00,157.50 L340.00,152.00" fill="none" stroke="#999" stroke-width="1.2" stroke-linecap="round" stroke-linejoin="round"/><path d="M364,166.5 L373,146 L382,166.5 M367,159.5 H379" fill="none" stroke="#999" stroke-width="2"/><rect x="355" y="167" width="36" height="7" fill="#f27474"/><path d="M395.00,152.00 L402.00,157.50 L409.00,152.00" fill="none" stroke="#999" stroke-width="1.2" stroke-linecap="round" stroke-linejoin="round"/><rect x="433.5" y="141.5" width="28.5" height="28.5" fill="none" stroke="#333" stroke-width="1.5" stroke-dasharray="2,2"/><path d="M447.7,141.5 V170 M433.5,155.7 H462" stroke="#333" stroke-width="1.5" stroke-dasharray="2,2"/><path d="M472.00,150.50 L479.00,158.00 L486.00,150.50" fill="none" stroke="#252423" stroke-width="2.3" stroke-linecap="round" stroke-linejoin="round"/><path d="M510.5,159 Q525,139 541,159" fill="none" stroke="#888" stroke-width="1.4"/><path d="M514,146 L535,166.5" stroke="#555" stroke-width="1.4"/><circle cx="525.5" cy="160" r="3" fill="none" stroke="#6e95cc" stroke-width="1.5"/><path d="M547.00,152.00 L554.50,159.00 L562.00,152.00" fill="none" stroke="#252423" stroke-width="2.3" stroke-linecap="round" stroke-linejoin="round"/><path d="M590.7,79.3 H623 M590.7,89.6 H612 M590.7,99 H623 M590.7,109 H612" stroke="#c8c8c8" stroke-width="1.5"/><path d="M629.40,91.00 L636.20,98.00 L643.00,91.00" fill="none" stroke="#c8c8c8" stroke-width="1.5" stroke-linecap="round" stroke-linejoin="round"/><path d="M673,109 H699" stroke="#1a56a8" stroke-width="1.5"/><path d="M695,105.5 L699.5,109 L695,112.5" fill="none" stroke="#1a56a8" stroke-width="1.5"/><path d="M710.00,93.00 L717.00,100.50 L724.00,93.00" fill="none" stroke="#252423" stroke-width="2.3" stroke-linecap="round" stroke-linejoin="round"/><path d="M765.5,100 V108 H754.5" fill="none" stroke="#1a56a8" stroke-width="1.6"/><path d="M758,104.5 L754.5,108 L758,111.5" fill="none" stroke="#1a56a8" stroke-width="1.6"/><path d="M809.3,87 V107.5" stroke="#333" stroke-width="2.6"/><path d="M804.2,89.5 L809.3,82 L814.4,89.5 Z M804.2,105.5 L809.3,113 L814.4,105.5 Z" fill="#333" stroke="#333" stroke-width="1.2" stroke-linejoin="round"/><path d="M876.00,94.00 L883.50,86.00 L891.00,94.00" fill="none" stroke="#333" stroke-width="1.4" stroke-linecap="round" stroke-linejoin="round"/><path d="M876.00,105.00 L883.50,113.00 L891.00,105.00" fill="none" stroke="#333" stroke-width="1.4" stroke-linecap="round" stroke-linejoin="round"/><path d="M590.7,149 H623 M596,156 H618 M590.7,163 H623" stroke="#c8c8c8" stroke-width="1.5"/><path d="M629.40,152.00 L636.20,158.00 L643.00,152.00" fill="none" stroke="#c8c8c8" stroke-width="1.5" stroke-linecap="round" stroke-linejoin="round"/><path d="M670,141 H700.6 M686,150.5 H700.6 M686,160.5 H700.6 M670,171 H700.6" stroke="#888" stroke-width="1.5"/><path d="M671,155.5 H683 M676,150.5 L671,155.5 L676,160.5" fill="none" stroke="#8eaede" stroke-width="1.5"/><path d="M739.7,141 H770.6 M739.7,150.5 H754 M739.7,160.5 H754 M739.7,171 H770.6" stroke="#888" stroke-width="1.5"/><path d="M757,155.5 H769.5 M764.5,150.5 L769.5,155.5 L764.5,160.5" fill="none" stroke="#8eaede" stroke-width="1.5"/><path d="M845.5,160 V141.5 H874.5 V160" fill="none" stroke="#333" stroke-width="1.6"/><path d="M846,167 H874 M850,163 L846,167 L850,171 M870,163 L874,167 L870,171" fill="none" stroke="#1a56a8" stroke-width="1.7"/><path d="M882.00,152.00 L889.00,159.00 L896.00,152.00" fill="none" stroke="#252423" stroke-width="2.3" stroke-linecap="round" stroke-linejoin="round"/><path d="M1066.00,95.00 L1073.00,103.00 L1080.00,95.00" fill="none" stroke="#252423" stroke-width="2.3" stroke-linecap="round" stroke-linejoin="round"/><path d="M1027,146.8 H1039 M1033,140.3 V153.3" stroke="#1a56a8" stroke-width="2.6"/><path d="M1069.5,146.8 H1081" stroke="#1a56a8" stroke-width="2.6"/><path d="M1121.5,79 V111" stroke="#c8d3e0" stroke-width="1.4"/><rect x="1122" y="81.5" width="13" height="10" fill="#cfe0f3" stroke="#b8cde6" stroke-width="1.2"/><rect x="1122" y="96" width="29" height="13" fill="#cfe0f3" stroke="#b8cde6" stroke-width="1.2"/><path d="M1159.00,90.00 L1166.00,98.00 L1173.00,90.00" fill="none" stroke="#999" stroke-width="1.8" stroke-linecap="round" stroke-linejoin="round"/><path d="M1184,80 V111 M1184,87 H1194 M1184,104 H1194" fill="none" stroke="#c8c8c8" stroke-width="1.3"/><rect x="1202.5" y="79.5" width="13" height="13" fill="#cfe0f3" stroke="#b8cde6" stroke-width="1.2"/><rect x="1193" y="97.5" width="13" height="13" fill="#cfe0f3" stroke="#b8cde6" stroke-width="1.2"/><path d="M1222.00,90.00 L1229.00,98.00 L1236.00,90.00" fill="none" stroke="#ccc" stroke-width="1.5" stroke-linecap="round" stroke-linejoin="round"/><rect x="1257.5" y="79.5" width="31" height="8" fill="none" stroke="#c8c8c8" stroke-width="1.3"/><rect x="1273" y="92" width="15.5" height="8" fill="none" stroke="#c8c8c8" stroke-width="1.3"/><rect x="1257.5" y="104" width="17" height="7.5" fill="#cfe0f3" stroke="#b8cde6" stroke-width="1.2"/><path d="M1296.00,90.00 L1303.00,98.00 L1310.00,90.00" fill="none" stroke="#ccc" stroke-width="1.5" stroke-linecap="round" stroke-linejoin="round"/><rect x="1120.5" y="143.5" width="31" height="22.5" fill="none" stroke="#c8c8c8" stroke-width="1.4"/><rect x="1121" y="149" width="27" height="12" fill="#cfe0f3" stroke="#b8cde6" stroke-width="1"/><path d="M1141,143.5 V149 M1141,161 V166" stroke="#c8c8c8" stroke-width="1.3"/><path d="M1159.00,152.00 L1166.00,159.00 L1173.00,152.00" fill="none" stroke="#999" stroke-width="1.8" stroke-linecap="round" stroke-linejoin="round"/><path d="M1189,167 L1199.5,156.5 L1204,160 L1214,144.5" fill="none" stroke="#bbb" stroke-width="1.3"/><circle cx="1189" cy="167" r="3.3" fill="#cfe0f3" stroke="#b8cde6" stroke-width="1.2"/><circle cx="1213.5" cy="143.5" r="3.3" fill="#cfe0f3" stroke="#b8cde6" stroke-width="1.2"/><path d="M1224.00,152.00 L1231.00,159.00 L1238.00,152.00" fill="none" stroke="#999" stroke-width="1.8" stroke-linecap="round" stroke-linejoin="round"/><path d="M1257,167 H1290" stroke="#1a56a8" stroke-width="2"/><rect x="1381" y="82" width="31" height="31" fill="none" stroke="#333" stroke-width="1.6"/><rect x="1388.5" y="82.5" width="15.5" height="8.5" fill="#6fa8e8" stroke="#1a56a8" stroke-width="1.4"/><rect x="1388.5" y="103.5" width="15.5" height="9" fill="#6fa8e8" stroke="#1a56a8" stroke-width="1.4"/><rect x="1388.5" y="93" width="8.5" height="8.5" fill="#f4a0a8" stroke="#d23a3a" stroke-width="1.3"/><path d="M1381,92 H1412 M1381,102.5 H1412" stroke="#333" stroke-width="1.3"/><path d="M1388.5,82 V113 M1404,82 V113" stroke="#333" stroke-width="0.9"/><path d="M1444.00,160.00 L1450.50,168.00 L1457.00,160.00" fill="none" stroke="#252423" stroke-width="2.3" stroke-linecap="round" stroke-linejoin="round"/><path d="M1512,87.5 V82 H1481 L1498,97.5 L1481,112.5 H1512 V107" fill="none" stroke="#333" stroke-width="2"/><path d="M1491.00,160.00 L1498.00,168.00 L1505.00,160.00" fill="none" stroke="#252423" stroke-width="2.3" stroke-linecap="round" stroke-linejoin="round"/><path d="M1545.5,112.5 V104 H1553 V96.5 H1561 V89.5 H1576 V112.5 Z" fill="none" stroke="#333" stroke-width="1.7"/><path d="M1563.5,82 H1577 L1570.2,89 Z" fill="#6fa8e8" stroke="#1a56a8" stroke-width="1.2"/><rect x="1634.5" y="81.5" width="13.5" height="13.5" fill="#6fa8e8" stroke="#1a56a8" stroke-width="1.5"/><path d="M1641.2,95 V101 M1628,109.5 V101 H1654.5 V109.5 M1641.2,101 V109.5" fill="none" stroke="#333" stroke-width="1.4"/><rect x="1625.5" y="107.5" width="5" height="5" fill="#6fa8e8" stroke="#1a56a8" stroke-width="1.4"/><rect x="1638.7" y="107.5" width="5" height="5" fill="#6fa8e8" stroke="#1a56a8" stroke-width="1.4"/><rect x="1651.8" y="107.5" width="5" height="5" fill="#6fa8e8" stroke="#1a56a8" stroke-width="1.4"/><path d="M1630.5,110 H1638.7 M1643.7,110 H1651.8" stroke="#1a56a8" stroke-width="1.4"/><path d="M1708.5,84.5 V110" stroke="#333" stroke-width="1.5"/><path d="M1705,89 L1708.5,84 L1712,89" fill="none" stroke="#333" stroke-width="1.5"/><path d="M1719.8,84 V110.5" stroke="#1a56a8" stroke-width="1.5"/><path d="M1716,106 L1719.8,111 L1723.5,106" fill="none" stroke="#1a56a8" stroke-width="1.5"/><circle cx="1776" cy="95.6" r="9.3" fill="#fff" stroke="#1a56a8" stroke-width="1.9"/><path d="M1769.5,102.5 L1756,116" stroke="#333" stroke-width="1.8"/><path d="M1758.5,147.5 H1786.5 L1775,161.5 V173 L1770,175 V161.5 Z" fill="none" stroke="#333" stroke-width="1.7" stroke-linejoin="round"/><path d="M1801.00,152.00 L1808.00,159.00 L1815.00,152.00" fill="none" stroke="#252423" stroke-width="2.3" stroke-linecap="round" stroke-linejoin="round"/><path d="M1878,83.5 H1894.5 V102 L1888,110 H1869 V94" fill="none" stroke="#a0a0a0" stroke-width="1.6"/><path d="M1888,110 V102.5 H1894.5" fill="none" stroke="#a0a0a0" stroke-width="1.3"/><path d="M1868,89 H1883.5 M1875.8,81 V97" stroke="#6e95cc" stroke-width="1.6"/><path d="M1875.00,157.50 L1882.50,165.00 L1890.00,157.50" fill="none" stroke="#252423" stroke-width="2.3" stroke-linecap="round" stroke-linejoin="round"/><path d="M1960,110.5 H1952.8 V85.5 H1975 V92" fill="none" stroke="#1a56a8" stroke-width="1.8"/><rect x="1953.5" y="86" width="21" height="5.5" fill="#6fa8e8"/><path d="M1963,102 V114 H1984 V98" fill="none" stroke="#555" stroke-width="1.5"/><path d="M1966,110 H1981 M1969,106 H1981 M1972,102 H1981" stroke="#7fb2e5" stroke-width="1.5" stroke-dasharray="1.5,2"/><path d="M1978.92,150.67 L1982.43,150.73 L1982.43,156.27 L1978.92,156.33 L1977.87,158.87 L1980.31,161.39 L1976.39,165.31 L1973.87,162.87 L1971.33,163.92 L1971.27,167.43 L1965.73,167.43 L1965.67,163.92 L1963.13,162.87 L1960.61,165.31 L1956.69,161.39 L1959.13,158.87 L1958.08,156.33 L1954.57,156.27 L1954.57,150.73 L1958.08,150.67 L1959.13,148.13 L1956.69,145.61 L1960.61,141.69 L1963.13,144.13 L1965.67,143.08 L1965.73,139.57 L1971.27,139.57 L1971.33,143.08 L1973.87,144.13 L1976.39,141.69 L1980.31,145.61 L1977.87,148.13 Z" fill="none" stroke="#333" stroke-width="1.5" stroke-linejoin="round"/><circle cx="1968.5" cy="153.5" r="4.3" fill="none" stroke="#1a56a8" stroke-width="1.6"/><path d="M2110,113.5 H2125 Q2140.5,113.5 2140.5,99 Q2140.5,87 2125,87 H2111" fill="none" stroke="#999" stroke-width="1.6"/><path d="M2116,82.5 L2110.5,87 L2115,91.5" fill="none" stroke="#999" stroke-width="1.6"/><path d="M2160.5,114 V84 H2191.5 V91 M2160.5,114 H2168" fill="none" stroke="#333" stroke-width="1.6"/><path d="M2165,84 V87.5 M2170,84 V87.5 M2175,84 V87.5 M2180,84 V87.5 M2185,84 V87.5 M2160.5,90 H2164 M2160.5,96 H2164 M2160.5,102 H2164 M2160.5,108 H2164" stroke="#333" stroke-width="1.3"/><path d="M2222,94.5 V85.5 H2237.5 L2243,91 V116.5 H2234" fill="none" stroke="#444" stroke-width="1.5"/><path d="M2237.5,85.5 V91 H2243" fill="none" stroke="#444" stroke-width="1.2"/><rect x="2211.5" y="94" width="23" height="23" fill="#1d7a45" stroke="#155f35" stroke-width="1"/><path d="M2218,100 L2228,111 M2228,100 L2218,111" stroke="#fff" stroke-width="2.4"/><path d="M2251.00,96.00 L2257.50,104.00 L2264.00,96.00" fill="none" stroke="#252423" stroke-width="2.3" stroke-linecap="round" stroke-linejoin="round"/><path d="M2140.5,168.5 H2125 Q2110,168.5 2110,156 Q2110,143 2125,143 H2139.5" fill="none" stroke="#999" stroke-width="1.6"/><path d="M2135,138.5 L2140,143 L2135.5,147.5" fill="none" stroke="#999" stroke-width="1.6"/><path d="M2168,162 H2163 Q2157.5,162 2157.5,156 Q2157.5,150.5 2163,150 Q2164,142 2172,142 Q2179,142 2181,148 Q2190,148 2190,155 Q2190,162 2183,162 H2178" fill="none" stroke="#444" stroke-width="1.5"/><path d="M2173,171 V151 M2167.5,156 L2173,150.5 L2178.5,156" fill="none" stroke="#1a56a8" stroke-width="1.7"/><path d="M2218,150 Q2213,155 2213,157 A13.5,13.5 0 1 0 2226.5,143.5" fill="none" stroke="#333" stroke-width="2.2"/><path d="M2212,150 L2219,147 L2219,155" fill="none" stroke="#333" stroke-width="2"/><path d="M2249.00,150.00 L2256.00,158.00 L2263.00,150.00" fill="none" stroke="#252423" stroke-width="2.3" stroke-linecap="round" stroke-linejoin="round"/><path d="M2278,133 L2290,143.5 L2278,154" fill="none" stroke="#333" stroke-width="1.3"/><path d="M2279.00,213.00 L2286.00,219.00 L2293.00,213.00" fill="none" stroke="#252423" stroke-width="2.3" stroke-linecap="round" stroke-linejoin="round"/><rect x="40.5" y="473.50" width="14" height="14" fill="none" stroke="#555" stroke-width="1.1"/><path d="M43.5,480.50 H51.5" stroke="#444" stroke-width="1.2"/><rect x="40.5" y="517.40" width="14" height="14" fill="none" stroke="#555" stroke-width="1.1"/><path d="M43.5,524.40 H51.5" stroke="#444" stroke-width="1.2"/><rect x="40.5" y="714.45" width="14" height="14" fill="none" stroke="#555" stroke-width="1.1"/><path d="M43.5,721.45 H51.5" stroke="#444" stroke-width="1.2"/><rect x="40.5" y="911.00" width="14" height="14" fill="none" stroke="#555" stroke-width="1.1"/><path d="M43.5,918.00 H51.5" stroke="#444" stroke-width="1.2"/><rect x="40.5" y="1107.55" width="14" height="14" fill="none" stroke="#555" stroke-width="1.1"/><path d="M43.5,1114.55 H51.5" stroke="#444" stroke-width="1.2"/><path d="M624,420.6 H643 M624,426.2 H643 M624,431.6 H643 M624,437.2 H643" stroke="#333" stroke-width="1.5"/><path d="M802.5,420.5 H823.5 L815,430.5 V439 H810.8 V430.5 Z" fill="none" stroke="#444" stroke-width="1.5" stroke-linejoin="round"/><path d="M868.50,461.10 L880.30,471.60 L868.50,482.10" fill="none" stroke="#444" stroke-width="1.3" stroke-linecap="round" stroke-linejoin="round"/><path d="M868.50,505.10 L880.30,515.60 L868.50,526.10" fill="none" stroke="#444" stroke-width="1.3" stroke-linecap="round" stroke-linejoin="round"/><path d="M868.50,765.00 L880.30,775.50 L868.50,786.00" fill="none" stroke="#444" stroke-width="1.3" stroke-linecap="round" stroke-linejoin="round"/><path d="M868.50,897.00 L880.30,907.50 L868.50,918.00" fill="none" stroke="#444" stroke-width="1.3" stroke-linecap="round" stroke-linejoin="round"/><path d="M868.50,941.00 L880.30,951.50 L868.50,962.00" fill="none" stroke="#444" stroke-width="1.3" stroke-linecap="round" stroke-linejoin="round"/><path d="M575,458.5 V484" stroke="#333" stroke-width="1.5"/><path d="M571,463 L575,458 L579,463" fill="none" stroke="#333" stroke-width="1.5"/><path d="M585.7,459 V485" stroke="#1a56a8" stroke-width="1.5"/><path d="M581.8,480.5 L585.7,485 L589.6,480.5" fill="none" stroke="#1a56a8" stroke-width="1.5"/><path d="M569,516 H592.7 M581,504.5 V527.7" stroke="#333" stroke-width="1.4"/><path d="M568.5,566.5 H564.5 V543 H596.5 V566.5 H592.5" fill="none" stroke="#444" stroke-width="1.5"/><rect x="575.5" y="550.5" width="15" height="23" fill="#fff" stroke="#444" stroke-width="1.5"/><rect x="578" y="553.5" width="10" height="4" fill="#6fa8e8" stroke="#1a56a8" stroke-width="1"/><g fill="#666"><rect x="578" y="561" width="2" height="2"/><rect x="582" y="561" width="2" height="2"/><rect x="586" y="561" width="2" height="2"/><rect x="578" y="565" width="2" height="2"/><rect x="582" y="565" width="2" height="2"/><rect x="586" y="565" width="2" height="2"/><rect x="578" y="569" width="2" height="2"/><rect x="582" y="569" width="2" height="2"/><rect x="586" y="569" width="2" height="2"/></g><path d="M566,615.5 L574.5,607" stroke="#333" stroke-width="1.5"/><path d="M584,589.5 L593,598.5 L586.5,602 L581,609.5 L570.5,599 L578,593.5 Z" fill="none" stroke="#333" stroke-width="1.5" stroke-linejoin="round"/><rect x="566.5" y="632" width="28" height="27.5" fill="none" stroke="#444" stroke-width="1.6"/><rect x="567.5" y="639.5" width="26" height="9" fill="#6fa8e8"/><path d="M566.5,639 H594.5 M566.5,649 H594.5" stroke="#444" stroke-width="1.5"/><circle cx="587.5" cy="654" r="6.5" fill="#fff" stroke="#444" stroke-width="1.4"/><path d="M583,649.5 L592,658.5" stroke="#6e95cc" stroke-width="1.4"/><path d="M566,688 H589 M582,681 L589,688 L582,695" fill="none" stroke="#1a56a8" stroke-width="1.6"/><path d="M593.5,676 V700" stroke="#333" stroke-width="1.6"/><path d="M565,732.5 Q580,714 596,732.5" fill="none" stroke="#444" stroke-width="1.5"/><path d="M569,721 L588.5,742" stroke="#444" stroke-width="1.5"/><circle cx="579.5" cy="736" r="2.8" fill="none" stroke="#1a56a8" stroke-width="1.5"/><path d="M591,770.5 V773.5 M570,771 L580,781 L570.5,790.5 H591 V787" fill="none" stroke="#333" stroke-width="1.5"/><circle cx="581.5" cy="766" r="3.2" fill="none" stroke="#1a56a8" stroke-width="2.2" stroke-dasharray="1.6,1.2"/><circle cx="581.5" cy="766" r="2" fill="none" stroke="#1a56a8" stroke-width="1.1"/><path d="M564.5,828 V804 H588.5" fill="none" stroke="#444" stroke-width="1.4"/><path d="M569,832 V808.5 H592" fill="none" stroke="#444" stroke-width="1.4"/><rect x="574" y="812.5" width="22" height="23" fill="#fff" stroke="#444" stroke-width="1.5"/><path d="M578.5,824.5 L582.5,829 L590,818.5" fill="none" stroke="#1a56a8" stroke-width="1.6"/><rect x="566.5" y="854" width="28.5" height="22.5" fill="none" stroke="#444" stroke-width="1.6"/><rect x="567.3" y="854.8" width="27" height="10.2" fill="#6fa8e8"/><path d="M566.5,865.3 H595 M580.7,854 V865.3" stroke="#444" stroke-width="1.5"/><path d="M564,918.6 H597" stroke="#1a56a8" stroke-width="2"/><circle cx="580.3" cy="951.2" r="14.5" fill="none" stroke="#444" stroke-width="1.6"/><path d="M571,951.3 H590" stroke="#1a56a8" stroke-width="1.6"/><path d="M1577.03,1263.92 L1580.53,1263.97 L1580.53,1269.43 L1577.03,1269.48 L1576.00,1271.97 L1578.44,1274.48 L1574.58,1278.34 L1572.07,1275.90 L1569.58,1276.93 L1569.53,1280.43 L1564.07,1280.43 L1564.02,1276.93 L1561.53,1275.90 L1559.02,1278.34 L1555.16,1274.48 L1557.60,1271.97 L1556.57,1269.48 L1553.07,1269.43 L1553.07,1263.97 L1556.57,1263.92 L1557.60,1261.43 L1555.16,1258.92 L1559.02,1255.06 L1561.53,1257.50 L1564.02,1256.47 L1564.07,1252.97 L1569.53,1252.97 L1569.58,1256.47 L1572.07,1257.50 L1574.58,1255.06 L1578.44,1258.92 L1576.00,1261.43 Z" fill="none" stroke="#333" stroke-width="1.5" stroke-linejoin="round"/><circle cx="1566.8" cy="1266.7" r="4.6" fill="none" stroke="#1a56a8" stroke-width="1.6"/><path d="M1601.5,1268 H1619" stroke="#333" stroke-width="1.8"/><path d="M1744.3,1268.4 H1763 M1753.6,1259.3 V1277.4" stroke="#333" stroke-width="1.8"/><path d="M1800,1257.7 V1275.2" stroke="#a5a5a5" stroke-width="3"/><path d="M1816.5,1258.5 L1807.5,1266.5 L1816.5,1274.5" fill="none" stroke="#a5a5a5" stroke-width="3"/><path d="M1839.5,1258.5 L1830.5,1266.5 L1839.5,1274.5" fill="none" stroke="#a5a5a5" stroke-width="3"/><path d="M2002,1258.5 L2010.5,1266.5 L2002,1274.5" fill="none" stroke="#252423" stroke-width="3.1"/><path d="M2024.5,1258.5 L2033,1266.5 L2024.5,1274.5" fill="none" stroke="#252423" stroke-width="3.1"/><path d="M2039.5,1257.7 V1275.2" stroke="#252423" stroke-width="3.1"/><rect x="2265.5" y="1251" width="8" height="6" fill="#cfcfcf"/><rect x="2265.5" y="1263" width="8" height="6" fill="#cfcfcf"/><rect x="2265.5" y="1275" width="8" height="7.5" fill="#e83a3a"/><rect x="2278.5" y="1251" width="7" height="6" fill="#cfcfcf"/><rect x="2277.5" y="1262" width="8.5" height="20.5" fill="#f5ad12"/><rect x="2290" y="1250" width="8.3" height="32.5" fill="#52c446"/></svg>
</div></body></html>
